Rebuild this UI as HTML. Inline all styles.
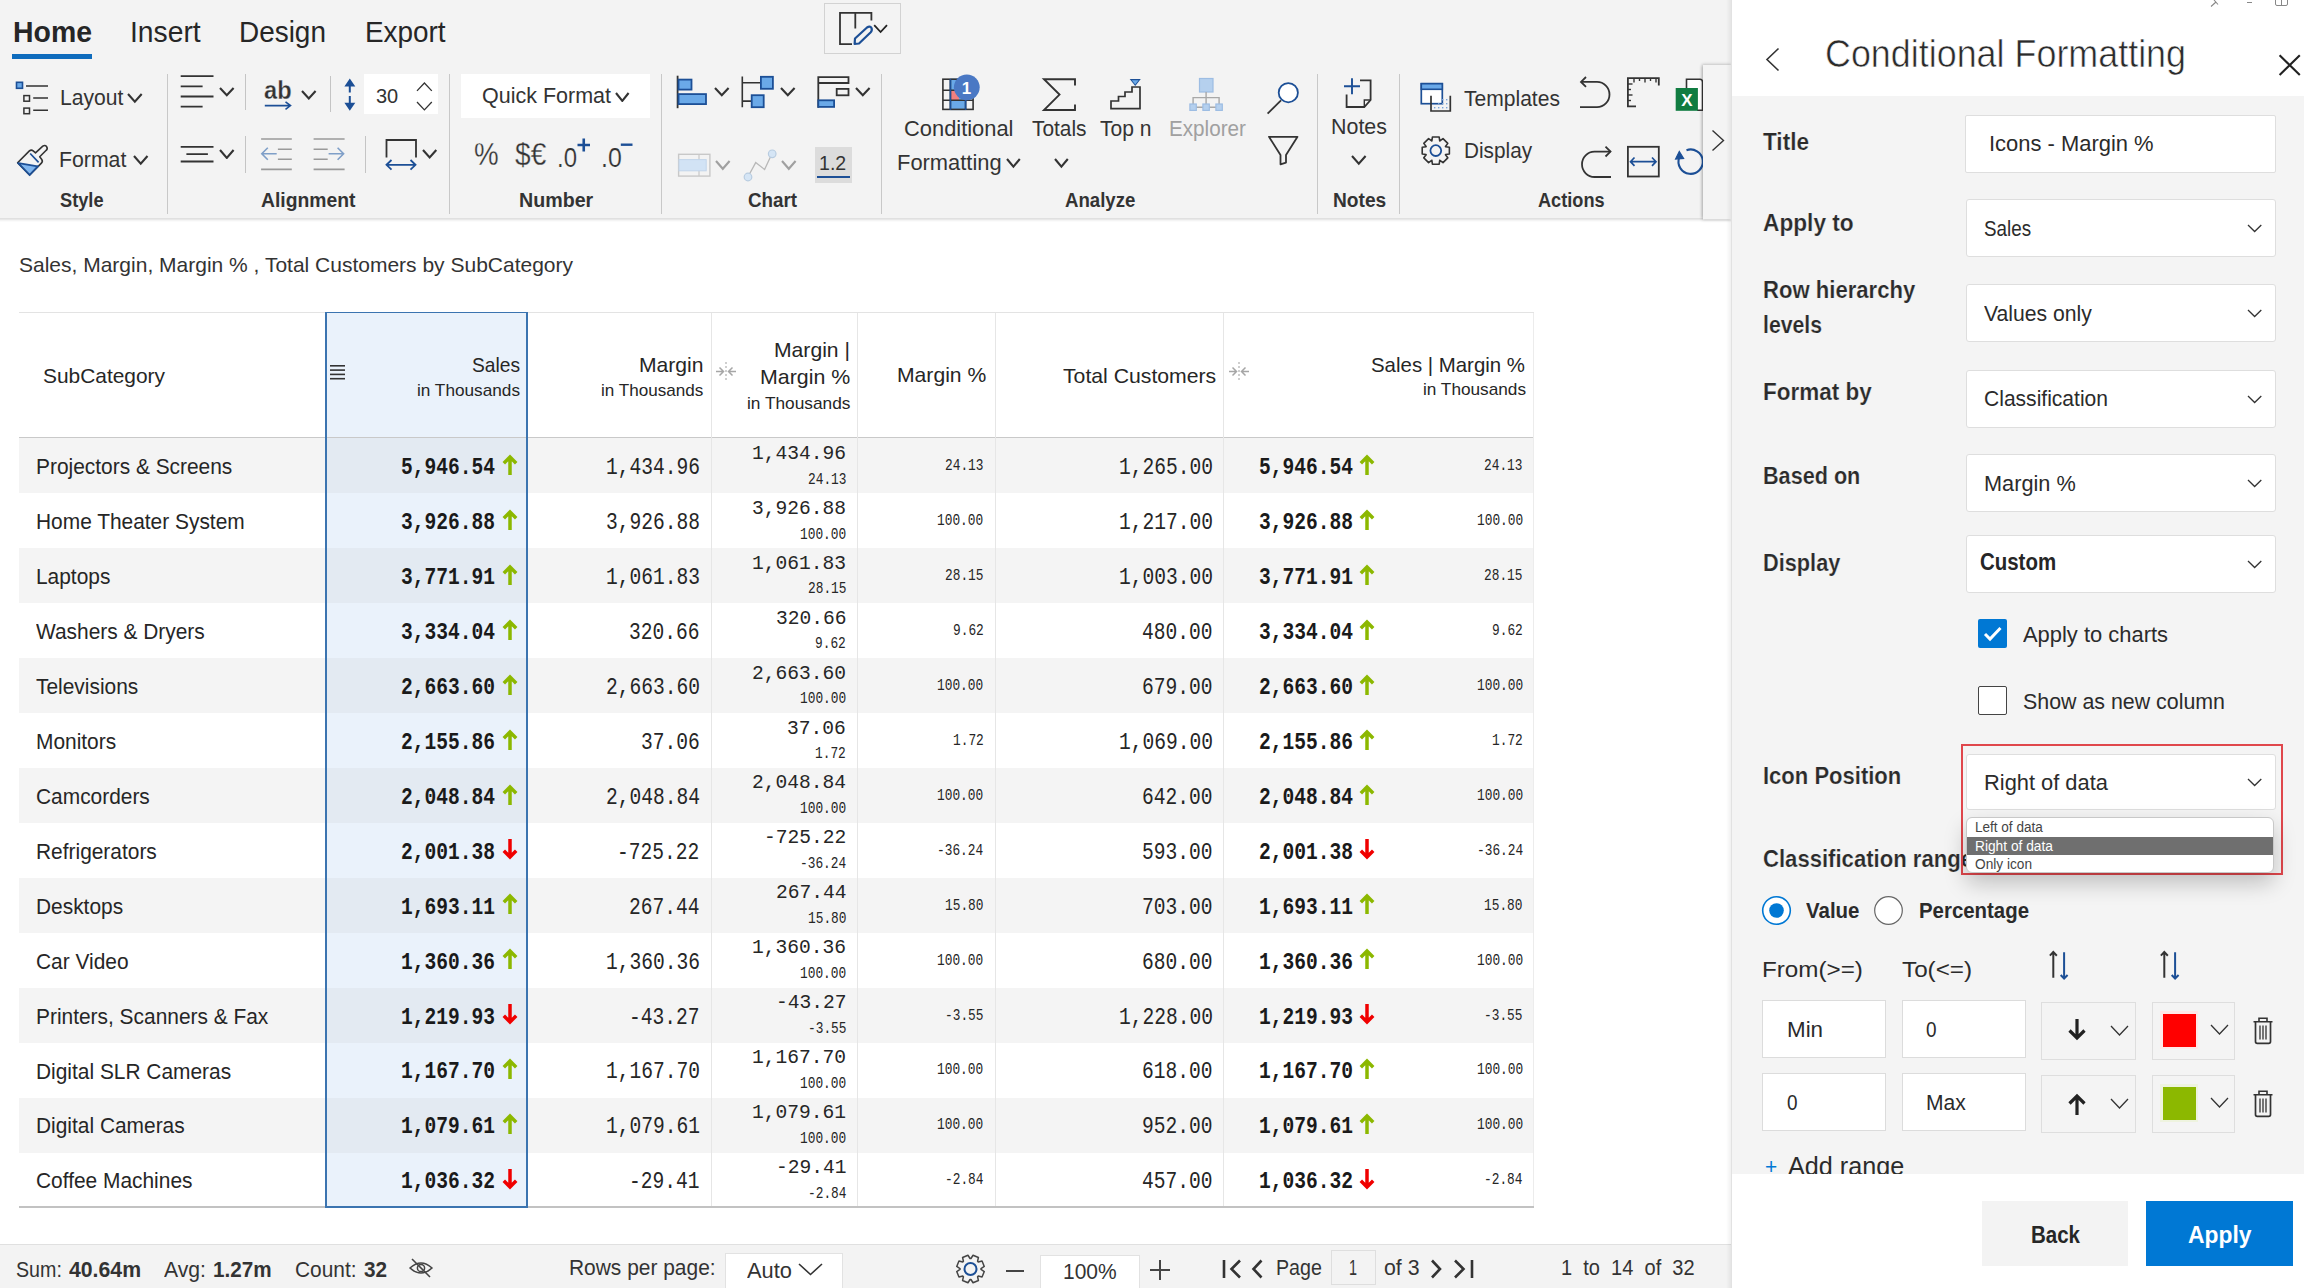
<!DOCTYPE html><html><head><meta charset="utf-8"><style>
*{margin:0;padding:0;box-sizing:border-box}
html,body{width:2304px;height:1288px;overflow:hidden;background:#fff;position:relative;font-family:"Liberation Sans",sans-serif}
.t{position:absolute;white-space:pre;transform-origin:0 0}
.r{position:absolute}
</style></head><body><div class="r" style="left:0px;top:0px;width:1732px;height:219px;background:#f3f3f3"></div>
<div class="r" style="left:0px;top:218px;width:1703px;height:2px;background:linear-gradient(#dcdcdc,#ececec)"></div>
<div class="r" style="left:0px;top:220px;width:1732px;height:2px;background:linear-gradient(rgba(0,0,0,0.06),rgba(0,0,0,0))"></div>
<div class="t" style="left:13.00px;top:16.90px;font-size:30px;line-height:30px;font-weight:700;color:#262626;font-family:'Liberation Sans', sans-serif;transform:scaleX(0.9472);">Home</div>
<div class="r" style="left:12px;top:54px;width:80px;height:5px;background:#0f6cbd"></div>
<div class="t" style="left:130.00px;top:16.90px;font-size:30px;line-height:30px;font-weight:400;color:#262626;font-family:'Liberation Sans', sans-serif;transform:scaleX(0.9413);">Insert</div>
<div class="t" style="left:239.00px;top:16.90px;font-size:30px;line-height:30px;font-weight:400;color:#262626;font-family:'Liberation Sans', sans-serif;transform:scaleX(0.9310);">Design</div>
<div class="t" style="left:365.00px;top:16.90px;font-size:30px;line-height:30px;font-weight:400;color:#262626;font-family:'Liberation Sans', sans-serif;transform:scaleX(0.9296);">Export</div>
<div class="r" style="left:824px;top:3px;width:77px;height:51px;border:1.5px solid #d2d2d2"></div>
<div class="r" style="left:167px;top:74px;width:1px;height:140px;background:#c8c8c8"></div>
<div class="r" style="left:449px;top:74px;width:1px;height:140px;background:#c8c8c8"></div>
<div class="r" style="left:661px;top:74px;width:1px;height:140px;background:#c8c8c8"></div>
<div class="r" style="left:881px;top:74px;width:1px;height:140px;background:#c8c8c8"></div>
<div class="r" style="left:1317px;top:74px;width:1px;height:140px;background:#c8c8c8"></div>
<div class="r" style="left:1399px;top:74px;width:1px;height:140px;background:#c8c8c8"></div>
<div class="r" style="left:245px;top:74px;width:1px;height:36px;background:#c4c4c4"></div>
<div class="r" style="left:330px;top:76px;width:1px;height:36px;background:#c4c4c4"></div>
<div class="r" style="left:245px;top:136px;width:1px;height:37px;background:#c4c4c4"></div>
<div class="r" style="left:365px;top:136px;width:1px;height:37px;background:#c4c4c4"></div>
<div class="t" style="left:60.00px;top:190.07px;font-size:20px;line-height:20px;font-weight:700;color:#333;font-family:'Liberation Sans', sans-serif;transform:scaleX(0.9100);">Style</div>
<div class="t" style="left:261.00px;top:190.07px;font-size:20px;line-height:20px;font-weight:700;color:#333;font-family:'Liberation Sans', sans-serif;transform:scaleX(0.9663);">Alignment</div>
<div class="t" style="left:518.70px;top:190.07px;font-size:20px;line-height:20px;font-weight:700;color:#333;font-family:'Liberation Sans', sans-serif;transform:scaleX(0.9828);">Number</div>
<div class="t" style="left:748.00px;top:190.07px;font-size:20px;line-height:20px;font-weight:700;color:#333;font-family:'Liberation Sans', sans-serif;transform:scaleX(0.9387);">Chart</div>
<div class="t" style="left:1065.00px;top:190.07px;font-size:20px;line-height:20px;font-weight:700;color:#333;font-family:'Liberation Sans', sans-serif;transform:scaleX(0.9312);">Analyze</div>
<div class="t" style="left:1332.70px;top:190.07px;font-size:20px;line-height:20px;font-weight:700;color:#333;font-family:'Liberation Sans', sans-serif;transform:scaleX(0.9586);">Notes</div>
<div class="t" style="left:1538.20px;top:189.57px;font-size:20px;line-height:20px;font-weight:700;color:#333;font-family:'Liberation Sans', sans-serif;transform:scaleX(0.9086);">Actions</div>
<div class="t" style="left:60.40px;top:87.08px;font-size:22px;line-height:22px;font-weight:400;color:#333333;font-family:'Liberation Sans', sans-serif;transform:scaleX(0.9590);">Layout</div>
<svg class="r" style="left:126.30000000000001px;top:92px;" width="17.69999999999999" height="11.700000000000003" viewBox="0 0 17.69999999999999 11.700000000000003" fill="none"><path d="M2 2 L8.85 9.70 L15.70 2" stroke="#333333" stroke-width="2.1" fill="none"/></svg>
<div class="t" style="left:58.70px;top:148.68px;font-size:22px;line-height:22px;font-weight:400;color:#333333;font-family:'Liberation Sans', sans-serif;transform:scaleX(0.9665);">Format</div>
<svg class="r" style="left:132px;top:154px;" width="17.5" height="11.75" viewBox="0 0 17.5 11.75" fill="none"><path d="M2 2 L8.75 9.75 L15.50 2" stroke="#333333" stroke-width="2.1" fill="none"/></svg>
<div class="r" style="left:364px;top:74px;width:74px;height:40px;background:#ffffff"></div>
<div class="t" style="left:376.00px;top:85.22px;font-size:21px;line-height:21px;font-weight:400;color:#333333;font-family:'Liberation Sans', sans-serif;transform:scaleX(0.9524);">30</div>
<svg class="r" style="left:415.3px;top:80.8px;" width="18.8" height="11.9" viewBox="0 0 18.8 11.9" fill="none"><path d="M2 9.9 L9.4 2 L16.8 9.9" stroke="#333" stroke-width="1.3" fill="none"/></svg>
<svg class="r" style="left:415.3px;top:99.6px;" width="18.80000000000001" height="11.900000000000006" viewBox="0 0 18.80000000000001 11.900000000000006" fill="none"><path d="M2 2 L9.40 9.90 L16.80 2" stroke="#333333" stroke-width="1.3" fill="none"/></svg>
<div class="t" style="left:263.80px;top:77.19px;font-size:26px;line-height:26px;font-weight:700;color:#333333;font-family:'Liberation Sans', sans-serif;transform:scaleX(0.9079);-webkit-text-stroke:0.3px #f3f3f3;">ab</div>
<svg class="r" style="left:217.8px;top:86.2px;" width="17.599999999999994" height="11.299999999999997" viewBox="0 0 17.599999999999994 11.299999999999997" fill="none"><path d="M2 2 L8.80 9.30 L15.60 2" stroke="#333333" stroke-width="2.1" fill="none"/></svg>
<svg class="r" style="left:300.2px;top:88.7px;" width="17.600000000000023" height="11.5" viewBox="0 0 17.600000000000023 11.5" fill="none"><path d="M2 2 L8.80 9.50 L15.60 2" stroke="#333333" stroke-width="2.1" fill="none"/></svg>
<svg class="r" style="left:217.8px;top:147.6px;" width="17.599999999999994" height="11.900000000000006" viewBox="0 0 17.599999999999994 11.900000000000006" fill="none"><path d="M2 2 L8.80 9.90 L15.60 2" stroke="#333333" stroke-width="2.1" fill="none"/></svg>
<svg class="r" style="left:421.4px;top:148.2px;" width="17.30000000000001" height="11.5" viewBox="0 0 17.30000000000001 11.5" fill="none"><path d="M2 2 L8.65 9.50 L15.30 2" stroke="#333333" stroke-width="2.1" fill="none"/></svg>
<div class="r" style="left:461px;top:74px;width:189px;height:44px;background:#ffffff"></div>
<div class="t" style="left:482.00px;top:85.50px;font-size:21.5px;line-height:21.5px;font-weight:400;color:#333333;font-family:'Liberation Sans', sans-serif;">Quick Format</div>
<svg class="r" style="left:614.2px;top:90.5px;" width="16.59999999999991" height="11.900000000000006" viewBox="0 0 16.59999999999991 11.900000000000006" fill="none"><path d="M2 2 L8.30 9.90 L14.60 2" stroke="#333333" stroke-width="2.1" fill="none"/></svg>
<div class="t" style="left:474.10px;top:139.36px;font-size:31px;line-height:31px;font-weight:400;color:#333333;font-family:'Liberation Sans', sans-serif;transform:scaleX(0.8953);-webkit-text-stroke:0.3px #f3f3f3;">%</div>
<div class="t" style="left:515.10px;top:139.36px;font-size:31px;line-height:31px;font-weight:400;color:#333333;font-family:'Liberation Sans', sans-serif;transform:scaleX(0.9067);-webkit-text-stroke:0.3px #f3f3f3;">$€</div>
<div class="t" style="left:557.00px;top:144.30px;font-size:28px;line-height:28px;font-weight:400;color:#333333;font-family:'Liberation Sans', sans-serif;transform:scaleX(0.8554);-webkit-text-stroke:0.2px #f3f3f3;">.0</div>
<div class="t" style="left:600.50px;top:144.30px;font-size:28px;line-height:28px;font-weight:400;color:#333333;font-family:'Liberation Sans', sans-serif;transform:scaleX(0.8896);-webkit-text-stroke:0.2px #f3f3f3;">.0</div>
<svg class="r" style="left:712.5px;top:86.3px;" width="17.600000000000023" height="11.299999999999997" viewBox="0 0 17.600000000000023 11.299999999999997" fill="none"><path d="M2 2 L8.80 9.30 L15.60 2" stroke="#333333" stroke-width="2.1" fill="none"/></svg>
<svg class="r" style="left:778.5px;top:86.3px;" width="17.600000000000023" height="11.299999999999997" viewBox="0 0 17.600000000000023 11.299999999999997" fill="none"><path d="M2 2 L8.80 9.30 L15.60 2" stroke="#333333" stroke-width="2.1" fill="none"/></svg>
<svg class="r" style="left:853.7px;top:86.3px;" width="17.600000000000023" height="11.299999999999997" viewBox="0 0 17.600000000000023 11.299999999999997" fill="none"><path d="M2 2 L8.80 9.30 L15.60 2" stroke="#333333" stroke-width="2.1" fill="none"/></svg>
<svg class="r" style="left:714.4px;top:159px;" width="17.600000000000023" height="11.800000000000011" viewBox="0 0 17.600000000000023 11.800000000000011" fill="none"><path d="M2 2 L8.80 9.80 L15.60 2" stroke="#a0a0a0" stroke-width="2.1" fill="none"/></svg>
<svg class="r" style="left:780.4px;top:159px;" width="17.600000000000023" height="11.800000000000011" viewBox="0 0 17.600000000000023 11.800000000000011" fill="none"><path d="M2 2 L8.80 9.80 L15.60 2" stroke="#a0a0a0" stroke-width="2.1" fill="none"/></svg>
<div class="r" style="left:815px;top:147px;width:37px;height:36px;background:#dcdcdc"></div>
<div class="t" style="left:819.30px;top:152.02px;font-size:21px;line-height:21px;font-weight:400;color:#333333;font-family:'Liberation Sans', sans-serif;transform:scaleX(0.9318);">1.2</div>
<div class="r" style="left:817px;top:175.5px;width:33px;height:2.2px;background:#1c4f96"></div>
<div class="t" style="left:903.50px;top:118.38px;font-size:22px;line-height:22px;font-weight:400;color:#333333;font-family:'Liberation Sans', sans-serif;transform:scaleX(0.9945);">Conditional</div>
<div class="t" style="left:897.30px;top:151.88px;font-size:22px;line-height:22px;font-weight:400;color:#333333;font-family:'Liberation Sans', sans-serif;transform:scaleX(0.9956);">Formatting</div>
<svg class="r" style="left:1005.2px;top:157.3px;" width="16.799999999999955" height="11.699999999999989" viewBox="0 0 16.799999999999955 11.699999999999989" fill="none"><path d="M2 2 L8.40 9.70 L14.80 2" stroke="#333333" stroke-width="2.1" fill="none"/></svg>
<div class="t" style="left:1032.40px;top:118.38px;font-size:22px;line-height:22px;font-weight:400;color:#333333;font-family:'Liberation Sans', sans-serif;transform:scaleX(0.9491);">Totals</div>
<svg class="r" style="left:1053.2px;top:157.3px;" width="16.799999999999955" height="11.699999999999989" viewBox="0 0 16.799999999999955 11.699999999999989" fill="none"><path d="M2 2 L8.40 9.70 L14.80 2" stroke="#333333" stroke-width="2.1" fill="none"/></svg>
<div class="t" style="left:1099.80px;top:118.38px;font-size:22px;line-height:22px;font-weight:400;color:#333333;font-family:'Liberation Sans', sans-serif;transform:scaleX(0.9574);">Top n</div>
<div class="t" style="left:1168.70px;top:117.98px;font-size:22px;line-height:22px;font-weight:400;color:#a0a0a0;font-family:'Liberation Sans', sans-serif;transform:scaleX(0.9396);">Explorer</div>
<div class="t" style="left:1331.40px;top:116.38px;font-size:22px;line-height:22px;font-weight:400;color:#333333;font-family:'Liberation Sans', sans-serif;transform:scaleX(0.9735);">Notes</div>
<svg class="r" style="left:1350px;top:154.1px;" width="17.59999999999991" height="11.599999999999994" viewBox="0 0 17.59999999999991 11.599999999999994" fill="none"><path d="M2 2 L8.80 9.60 L15.60 2" stroke="#333333" stroke-width="2.1" fill="none"/></svg>
<div class="t" style="left:1463.70px;top:87.88px;font-size:22px;line-height:22px;font-weight:400;color:#333333;font-family:'Liberation Sans', sans-serif;transform:scaleX(0.9569);">Templates</div>
<div class="t" style="left:1464.40px;top:140.18px;font-size:22px;line-height:22px;font-weight:400;color:#333333;font-family:'Liberation Sans', sans-serif;transform:scaleX(0.9437);">Display</div>
<div class="r" style="left:1703px;top:65px;width:29px;height:154px;background:#f7f7f7;box-shadow:-1px 1px 3px rgba(0,0,0,0.18)"></div>
<svg class="r" style="left:1710px;top:128px;" width="16" height="26" viewBox="0 0 16 26" fill="none"><path d="M2.5 2.5 L13.5 12.5 L2.5 22.5" stroke="#333" stroke-width="1.4"/></svg>
<svg class="r" style="left:0;top:0" width="1732" height="220" viewBox="0 0 1732 220" fill="none"><rect x="16.5" y="82.3" width="6" height="6" fill="#6aa9e8" stroke="#1c4f96" stroke-width="1.6"/><rect x="23.9" y="95.6" width="5.6" height="5.6" stroke="#333333" stroke-width="1.5"/><rect x="23.9" y="108.1" width="5.6" height="5.6" stroke="#333333" stroke-width="1.5"/><path d="M26 86 H48 M33.2 98.1 H48 M33.2 110.2 H48" stroke="#333333" stroke-width="1.5"/><path d="M18.2 162.9 L37.8 166.3 L29.65 174.6 Z" fill="#7fb6f0"/><path d="M17.63 162.7 L29.4 150.9 Q31.3 149.3 33.2 150.9 L35.5 152.9 L42.8 146.2 Q44.9 144.6 46.6 146.6 Q48 148.6 46.2 150.3 L39.7 156.8 L41.6 159.2 Q43.2 161.2 41.4 163.1 L29.65 175 Z" stroke="#333333" stroke-width="1.6" stroke-linejoin="round"/><path d="M17.63 162.7 L29.65 175 L38.6 165.6 M18.5 163.2 L37.8 166.3 M30.2 153.5 L38.6 162.4" stroke="#1c4f96" stroke-width="1.7"/><path d="M852 44.2 H840 V12.8 H871.4 V20.5 M855.3 12.8 V28.4" stroke="#333333" stroke-width="1.8"/><path d="M854.6 44 L855 38.5 L867 27.5 Q870 25.5 871.5 28 Q872.5 30.5 870.5 32.5 L859 43.5 Z" stroke="#1c4f96" stroke-width="2.2" stroke-linejoin="round"/><path d="M874.2 25.2 L880.6 32 L887 25.2" stroke="#222" stroke-width="1.8"/><path d="M180.7 76.1 H213.5 M180.7 86.4 H202.6 M180.7 96.5 H213.5 M180.7 106.7 H202.6" stroke="#333333" stroke-width="1.8"/><path d="M180.7 146.8 H213.5 M186.4 154.1 H207.9 M180.7 161.5 H213.5" stroke="#333333" stroke-width="1.8"/><path d="M264.8 105.6 H290.5 M285.5 101.8 L290.5 105.6 L285.5 109.4" stroke="#1c4f96" stroke-width="1.6"/><path d="M349.8 84 V92.5 M349.8 96 V105" stroke="#1c4f96" stroke-width="2"/><path d="M344.4 86.5 L349.8 78.5 L355.3 86.5 Z M344.4 102.7 L349.8 110.7 L355.3 102.7 Z" fill="#1c4f96"/><path d="M261.1 139 H291.8 M277.9 149.2 H291.8 M277.9 159.3 H291.8 M261.1 169.4 H291.8" stroke="#9a9a9a" stroke-width="1.6"/><path d="M276.7 153.8 H262 M267.8 147.8 L261.8 153.8 L267.8 159.8" stroke="#7f9fc8" stroke-width="1.6"/><path d="M313.6 139 H344.6 M313.6 149.2 H327.7 M313.6 159.3 H327.7 M313.6 169.4 H344.6" stroke="#9a9a9a" stroke-width="1.6"/><path d="M328.6 153.8 H343.6 M337.6 147.8 L343.6 153.8 L337.6 159.8" stroke="#7f9fc8" stroke-width="1.6"/><path d="M386.5 157.5 V140 H416 V157.5" stroke="#333333" stroke-width="1.8"/><path d="M387 164.8 H415.5 M391.5 160 L386.5 164.8 L391.5 169.6 M410.5 160 L415.5 164.8 L410.5 169.6" stroke="#1c4f96" stroke-width="1.8"/><path d="M577.5 145 H590 M583.75 138.6 V151.6" stroke="#1c4f96" stroke-width="2.6"/><path d="M620.8 144.7 H632.5" stroke="#1c4f96" stroke-width="2.4"/><path d="M677.6 75.7 V108.2" stroke="#333333" stroke-width="1.8"/><rect x="678.5" y="79.6" width="13" height="10" fill="#6aa9e8" stroke="#1c4f96" stroke-width="1.8"/><rect x="678.5" y="94.1" width="27.5" height="10" fill="#6aa9e8" stroke="#1c4f96" stroke-width="1.8"/><path d="M742.3 76.6 V107.2 M742.3 82.8 H760 M742.3 101.1 H751" stroke="#333333" stroke-width="1.6"/><rect x="760.9" y="76.8" width="12" height="12" fill="#6aa9e8" stroke="#1c4f96" stroke-width="1.8"/><rect x="751.7" y="95.2" width="12" height="12" fill="#6aa9e8" stroke="#1c4f96" stroke-width="1.8"/><path d="M818.3 107.7 V77.1 H848.5 V83 H818.3" stroke="#333333" stroke-width="1.8"/><rect x="836.7" y="88.9" width="11.8" height="6.4" stroke="#333333" stroke-width="1.8"/><rect x="818.3" y="100.3" width="15.8" height="6.6" fill="#6aa9e8" stroke="#1c4f96" stroke-width="1.8"/><rect x="678.6" y="154.3" width="31.3" height="21.8" stroke="#c8c8c8" stroke-width="1.4"/><path d="M699 154.3 V176" stroke="#c8c8c8" stroke-width="1.2"/><rect x="679" y="159.6" width="27.2" height="11.2" fill="#d2e3f5" stroke="#c3d5ea" stroke-width="1"/><path d="M749.5 174 L755.7 162.6 L764.6 169.5 L770.5 156.8" stroke="#b8b8b8" stroke-width="1.3"/><circle cx="748" cy="177" r="3.8" fill="#d5e5f5" stroke="#b8cce0" stroke-width="1.2"/><circle cx="772.2" cy="153.8" r="3.8" fill="#d5e5f5" stroke="#b8cce0" stroke-width="1.2"/><rect x="950.4" y="78.5" width="15.2" height="31.6" fill="#6aa9e8"/><path d="M950.8 90.2 H959 V100 H950.8 Z" fill="#f08080"/><rect x="942.9" y="79.2" width="30.2" height="30.2" stroke="#333333" stroke-width="1.6"/><path d="M950.4 79 V110 M965.6 79 V110 M943 90.2 H973 M943 100.2 H973" stroke="#333333" stroke-width="1.6"/><path d="M950.4 79 V110 M965.6 79 V110" stroke="#1c4f96" stroke-width="1.6"/><circle cx="966.8" cy="87.3" r="12.9" fill="#4a78c4"/><text x="966.5" y="94" font-family="Liberation Sans" font-weight="700" font-size="17" fill="#fff" text-anchor="middle">1</text><path d="M1075 85.5 V79.3 H1044 L1059.5 94.6 L1044 110 H1075 V104.5" stroke="#333333" stroke-width="1.9" stroke-linejoin="miter"/><path d="M1111 108.7 V101 H1118.5 V96.5 H1125 V92 H1132 V87 H1140 V108.7 Z" stroke="#333333" stroke-width="1.7"/><path d="M1129.7 79 H1140.8 L1135.25 86.1 Z" fill="#1c4f96"/><path d="M1131.8 80.3 H1138.7 L1135.25 84.5 Z" fill="#6aa9e8"/><rect x="1199.5" y="78.5" width="13.5" height="13.5" fill="#b5d0ee" stroke="#9dbde3" stroke-width="1.2"/><path d="M1206.1 92 V107 M1193.1 104 V97.6 H1219.1 V104 M1193 107.3 H1219" stroke="#a8a8a8" stroke-width="1.4"/><rect x="1189.8999999999999" y="104" width="6.4" height="6.4" fill="#b5d0ee" stroke="#9dbde3" stroke-width="1.2"/><rect x="1202.8999999999999" y="104" width="6.4" height="6.4" fill="#b5d0ee" stroke="#9dbde3" stroke-width="1.2"/><rect x="1215.8999999999999" y="104" width="6.4" height="6.4" fill="#b5d0ee" stroke="#9dbde3" stroke-width="1.2"/><circle cx="1288.3" cy="92.7" r="9.6" fill="#fff" stroke="#1c4f96" stroke-width="1.8"/><path d="M1267.6 113.6 L1281 100.4" stroke="#333333" stroke-width="1.8"/><path d="M1269 136.8 H1297.5 L1286 155 V162.6 L1280.5 164.3 V155 Z" stroke="#333333" stroke-width="1.8" stroke-linejoin="round"/><path d="M1360 80.4 H1370.6 V100 L1364.3 107 H1346.6 V94.5" stroke="#333333" stroke-width="1.8"/><path d="M1370.6 100 H1364.3 V107" stroke="#333333" stroke-width="1.4"/><path d="M1344 86.3 H1360 M1352 78.3 V94.3" stroke="#1c4f96" stroke-width="1.9"/><rect x="1421.3" y="83.7" width="21" height="20" fill="#fff" stroke="#1c4f96" stroke-width="1.7"/><rect x="1421.3" y="83.7" width="21" height="5.6" fill="#6aa9e8" stroke="#1c4f96" stroke-width="1.6"/><path d="M1431 95.8 V111 H1450.3 V95.8" stroke="#333333" stroke-width="1.7"/><rect x="1442" y="99" width="1.4" height="1.4" fill="#7aa3d6"/><rect x="1446" y="99" width="1.4" height="1.4" fill="#7aa3d6"/><rect x="1438" y="103" width="1.4" height="1.4" fill="#7aa3d6"/><rect x="1442" y="103" width="1.4" height="1.4" fill="#7aa3d6"/><rect x="1446" y="103" width="1.4" height="1.4" fill="#7aa3d6"/><rect x="1434" y="107" width="1.4" height="1.4" fill="#7aa3d6"/><rect x="1438" y="107" width="1.4" height="1.4" fill="#7aa3d6"/><rect x="1442" y="107" width="1.4" height="1.4" fill="#7aa3d6"/><rect x="1446" y="107" width="1.4" height="1.4" fill="#7aa3d6"/><path d="M1449.38 147.21 L1449.38 153.99 L1445.54 154.53 L1445.47 154.70 L1447.80 157.81 L1443.01 162.60 L1439.90 160.27 L1439.73 160.34 L1439.19 164.18 L1432.41 164.18 L1431.87 160.34 L1431.70 160.27 L1428.59 162.60 L1423.80 157.81 L1426.13 154.70 L1426.06 154.53 L1422.22 153.99 L1422.22 147.21 L1426.06 146.67 L1426.13 146.50 L1423.80 143.39 L1428.59 138.60 L1431.70 140.93 L1431.87 140.86 L1432.41 137.02 L1439.19 137.02 L1439.73 140.86 L1439.90 140.93 L1443.01 138.60 L1447.80 143.39 L1445.47 146.50 L1445.54 146.67 Z" stroke="#333333" stroke-width="1.6" stroke-linejoin="round"/><circle cx="1435.8" cy="150.6" r="5.4" stroke="#1c4f96" stroke-width="1.8"/><path d="M1581 81.9 H1597 A12.5 12.6 0 0 1 1597 107.1 H1580" stroke="#333333" stroke-width="1.8"/><path d="M1586 77 L1581 81.9 L1586 86.8" stroke="#333333" stroke-width="1.8"/><path d="M1610.5 151.6 H1594.5 A12.5 12.7 0 0 0 1594.5 177 H1611" stroke="#333333" stroke-width="1.8"/><path d="M1605.5 146.7 L1610.5 151.6 L1605.5 156.5" stroke="#333333" stroke-width="1.8"/><path d="M1636 106.3 H1627.9 V78.1 H1658.8 V85.5" stroke="#333333" stroke-width="1.8"/><path d="M1634.0 78 V82.5" stroke="#333333" stroke-width="1.4"/><path d="M1639.5 78 V81" stroke="#333333" stroke-width="1.4"/><path d="M1645.0 78 V82.5" stroke="#333333" stroke-width="1.4"/><path d="M1650.5 78 V81" stroke="#333333" stroke-width="1.4"/><path d="M1656.0 78 V82.5" stroke="#333333" stroke-width="1.4"/><path d="M1628 84.0 H1632.5" stroke="#333333" stroke-width="1.4"/><path d="M1628 89.5 H1631" stroke="#333333" stroke-width="1.4"/><path d="M1628 95.0 H1632.5" stroke="#333333" stroke-width="1.4"/><path d="M1628 100.5 H1631" stroke="#333333" stroke-width="1.4"/><rect x="1627.9" y="146.8" width="30.9" height="29.7" stroke="#333333" stroke-width="1.8"/><path d="M1630.5 161.7 H1656 M1634.5 157.5 L1630.5 161.7 L1634.5 165.9 M1652 157.5 L1656 161.7 L1652 165.9" stroke="#1c4f96" stroke-width="1.7"/><path d="M1686.5 88 V79.3 H1700 Q1702.5 79.3 1702.5 82 V110.3 H1697" fill="#fff" stroke="#333333" stroke-width="1.6"/><rect x="1675.7" y="88" width="22.2" height="22.8" fill="#107c41"/><text x="1686.8" y="106" font-family="Liberation Sans" font-weight="700" font-size="17" fill="#fff" text-anchor="middle">X</text><path d="M1686.5 150.2 A12.2 12.2 0 1 1 1679.2 157.5" stroke="#1c4f96" stroke-width="2.1"/><path d="M1675.6 159 L1679.3 151.5 L1683.6 158.4 Z" fill="#1c4f96" stroke="#1c4f96" stroke-width="1.2"/></svg>
<div class="r" style="left:1703px;top:65px;width:29px;height:154px;background:#f4f4f4;box-shadow:-1px -1px 3px rgba(0,0,0,0.16)"></div>
<svg class="r" style="left:1710px;top:128px;" width="16" height="26" viewBox="0 0 16 26" fill="none"><path d="M2.5 2.5 L13.5 12.5 L2.5 22.5" stroke="#333" stroke-width="1.4"/></svg>
<div class="t" style="left:19.00px;top:254.22px;font-size:21px;line-height:21px;font-weight:400;color:#333333;font-family:'Liberation Sans', sans-serif;">Sales, Margin, Margin % , Total Customers by SubCategory</div>
<div class="r" style="left:19px;top:312px;width:1515px;height:1px;background:#e3e3e3"></div>
<div class="r" style="left:19px;top:438px;width:1515px;height:55px;background:#f4f4f4"></div>
<div class="r" style="left:19px;top:548px;width:1515px;height:55px;background:#f4f4f4"></div>
<div class="r" style="left:19px;top:658px;width:1515px;height:55px;background:#f4f4f4"></div>
<div class="r" style="left:19px;top:768px;width:1515px;height:55px;background:#f4f4f4"></div>
<div class="r" style="left:19px;top:878px;width:1515px;height:55px;background:#f4f4f4"></div>
<div class="r" style="left:19px;top:988px;width:1515px;height:55px;background:#f4f4f4"></div>
<div class="r" style="left:19px;top:1098px;width:1515px;height:55px;background:#f4f4f4"></div>
<div class="r" style="left:325px;top:312px;width:203px;height:126px;background:#eaf2fb"></div>
<div class="r" style="left:325px;top:438px;width:203px;height:55px;background:#e3eaf2"></div>
<div class="r" style="left:325px;top:493px;width:203px;height:55px;background:#eaf2fb"></div>
<div class="r" style="left:325px;top:548px;width:203px;height:55px;background:#e3eaf2"></div>
<div class="r" style="left:325px;top:603px;width:203px;height:55px;background:#eaf2fb"></div>
<div class="r" style="left:325px;top:658px;width:203px;height:55px;background:#e3eaf2"></div>
<div class="r" style="left:325px;top:713px;width:203px;height:55px;background:#eaf2fb"></div>
<div class="r" style="left:325px;top:768px;width:203px;height:55px;background:#e3eaf2"></div>
<div class="r" style="left:325px;top:823px;width:203px;height:55px;background:#eaf2fb"></div>
<div class="r" style="left:325px;top:878px;width:203px;height:55px;background:#e3eaf2"></div>
<div class="r" style="left:325px;top:933px;width:203px;height:55px;background:#eaf2fb"></div>
<div class="r" style="left:325px;top:988px;width:203px;height:55px;background:#e3eaf2"></div>
<div class="r" style="left:325px;top:1043px;width:203px;height:55px;background:#eaf2fb"></div>
<div class="r" style="left:325px;top:1098px;width:203px;height:55px;background:#e3eaf2"></div>
<div class="r" style="left:325px;top:1153px;width:203px;height:55px;background:#eaf2fb"></div>
<div class="r" style="left:19px;top:436.8px;width:1515px;height:1.7px;background:#c9c9c9"></div>
<div class="r" style="left:19px;top:1206px;width:1515px;height:2px;background:#c2c2c2"></div>
<div class="r" style="left:711px;top:313px;width:1px;height:893px;background:#e6e6e6"></div>
<div class="r" style="left:857px;top:313px;width:1px;height:893px;background:#e6e6e6"></div>
<div class="r" style="left:995px;top:313px;width:1px;height:893px;background:#e6e6e6"></div>
<div class="r" style="left:1223px;top:313px;width:1px;height:893px;background:#e6e6e6"></div>
<div class="r" style="left:1533px;top:313px;width:1px;height:893px;background:#ececec"></div>
<div class="r" style="left:325px;top:312px;width:203px;height:896px;border:2px solid #3b74b0;border-top-width:1.6px"></div>
<div class="t" style="left:43.00px;top:365.22px;font-size:21px;line-height:21px;font-weight:400;color:#262626;font-family:'Liberation Sans', sans-serif;transform:scaleX(0.9956);">SubCategory</div>
<div class="t" style="left:472.00px;top:354.22px;font-size:21px;line-height:21px;font-weight:400;color:#262626;font-family:'Liberation Sans', sans-serif;transform:scaleX(0.9143);">Sales</div>
<div class="t" style="left:417.00px;top:381.61px;font-size:17px;line-height:17px;font-weight:400;color:#262626;font-family:'Liberation Sans', sans-serif;transform:scaleX(1.0123);">in Thousands</div>
<div class="t" style="left:638.50px;top:354.22px;font-size:21px;line-height:21px;font-weight:400;color:#262626;font-family:'Liberation Sans', sans-serif;transform:scaleX(1.0054);">Margin</div>
<div class="t" style="left:600.70px;top:381.61px;font-size:17px;line-height:17px;font-weight:400;color:#262626;font-family:'Liberation Sans', sans-serif;transform:scaleX(1.0055);">in Thousands</div>
<div class="t" style="left:774.00px;top:339.22px;font-size:21px;line-height:21px;font-weight:400;color:#262626;font-family:'Liberation Sans', sans-serif;transform:scaleX(1.0067);">Margin |</div>
<div class="t" style="left:759.70px;top:366.22px;font-size:21px;line-height:21px;font-weight:400;color:#262626;font-family:'Liberation Sans', sans-serif;transform:scaleX(1.0178);">Margin %</div>
<div class="t" style="left:746.60px;top:394.61px;font-size:17px;line-height:17px;font-weight:400;color:#262626;font-family:'Liberation Sans', sans-serif;transform:scaleX(1.0163);">in Thousands</div>
<div class="t" style="left:896.70px;top:364.22px;font-size:21px;line-height:21px;font-weight:400;color:#262626;font-family:'Liberation Sans', sans-serif;transform:scaleX(1.0065);">Margin %</div>
<div class="t" style="left:1063.40px;top:365.22px;font-size:21px;line-height:21px;font-weight:400;color:#262626;font-family:'Liberation Sans', sans-serif;transform:scaleX(1.0097);">Total Customers</div>
<div class="t" style="left:1371.00px;top:354.22px;font-size:21px;line-height:21px;font-weight:400;color:#262626;font-family:'Liberation Sans', sans-serif;transform:scaleX(0.9726);">Sales | Margin %</div>
<div class="t" style="left:1423.00px;top:380.61px;font-size:17px;line-height:17px;font-weight:400;color:#262626;font-family:'Liberation Sans', sans-serif;transform:scaleX(1.0123);">in Thousands</div>
<svg class="r" style="left:330px;top:364px;" width="16" height="17" viewBox="0 0 16 17" fill="none"><rect x="0" y="1.0" width="15" height="1.6" fill="#333"/><rect x="0" y="5.3" width="15" height="1.6" fill="#333"/><rect x="0" y="9.6" width="15" height="1.6" fill="#333"/><rect x="0" y="13.9" width="15" height="1.6" fill="#333"/></svg>
<svg class="r" style="left:715px;top:361px;" width="22" height="21" viewBox="0 0 22 21" fill="none"><path d="M1 10.5 H8 M4.5 6.5 L8.5 10.5 L4.5 14.5 M21 10.5 H14 M17.5 6.5 L13.5 10.5 L17.5 14.5" stroke="#a6a6a6" stroke-width="1.5"/><path d="M11 1 V20" stroke="#b0b0b0" stroke-width="1.2" stroke-dasharray="2 2"/></svg>
<svg class="r" style="left:1227.5px;top:361px;" width="22" height="21" viewBox="0 0 22 21" fill="none"><path d="M1 10.5 H8 M4.5 6.5 L8.5 10.5 L4.5 14.5 M21 10.5 H14 M17.5 6.5 L13.5 10.5 L17.5 14.5" stroke="#a6a6a6" stroke-width="1.5"/><path d="M11 1 V20" stroke="#b0b0b0" stroke-width="1.2" stroke-dasharray="2 2"/></svg>
<div class="t" style="left:36.00px;top:456.38px;font-size:22px;line-height:22px;font-weight:400;color:#262626;font-family:'Liberation Sans', sans-serif;transform:scaleX(0.9500);">Projectors &amp; Screens</div>
<div class="t" style="left:400.51px;top:457.37px;font-size:23px;line-height:23px;font-weight:700;color:#1a1a1a;font-family:'Liberation Mono', monospace;transform:scaleX(0.8513);">5,946.54</div>
<svg class="r" style="left:501.5px;top:454.0px;" width="16" height="21" viewBox="0 0 16 21" fill="none"><path d="M8 21 V3 M1.8 9.2 L8 3 L14.2 9.2" stroke="#8cb800" stroke-width="3.5" stroke-linecap="butt" stroke-linejoin="miter"/></svg>
<div class="t" style="left:605.51px;top:457.37px;font-size:23px;line-height:23px;font-weight:400;color:#262626;font-family:'Liberation Mono', monospace;transform:scaleX(0.8513);">1,434.96</div>
<div class="t" style="left:752.01px;top:442.90px;font-size:21px;line-height:21px;font-weight:400;color:#262626;font-family:'Liberation Mono', monospace;transform:scaleX(0.9324);">1,434.96</div>
<div class="t" style="left:807.51px;top:471.65px;font-size:16.5px;line-height:16.5px;font-weight:400;color:#262626;font-family:'Liberation Mono', monospace;transform:scaleX(0.7777);">24.13</div>
<div class="t" style="left:945.01px;top:458.35px;font-size:16.5px;line-height:16.5px;font-weight:400;color:#262626;font-family:'Liberation Mono', monospace;transform:scaleX(0.7777);">24.13</div>
<div class="t" style="left:1118.51px;top:457.37px;font-size:23px;line-height:23px;font-weight:400;color:#262626;font-family:'Liberation Mono', monospace;transform:scaleX(0.8513);">1,265.00</div>
<div class="t" style="left:1258.51px;top:457.37px;font-size:23px;line-height:23px;font-weight:700;color:#1a1a1a;font-family:'Liberation Mono', monospace;transform:scaleX(0.8513);">5,946.54</div>
<svg class="r" style="left:1359px;top:454.0px;" width="16" height="21" viewBox="0 0 16 21" fill="none"><path d="M8 21 V3 M1.8 9.2 L8 3 L14.2 9.2" stroke="#8cb800" stroke-width="3.5" stroke-linecap="butt" stroke-linejoin="miter"/></svg>
<div class="t" style="left:1484.31px;top:458.35px;font-size:16.5px;line-height:16.5px;font-weight:400;color:#262626;font-family:'Liberation Mono', monospace;transform:scaleX(0.7777);">24.13</div>
<div class="t" style="left:36.00px;top:511.30px;font-size:22px;line-height:22px;font-weight:400;color:#262626;font-family:'Liberation Sans', sans-serif;transform:scaleX(0.9500);">Home Theater System</div>
<div class="t" style="left:400.51px;top:512.29px;font-size:23px;line-height:23px;font-weight:700;color:#1a1a1a;font-family:'Liberation Mono', monospace;transform:scaleX(0.8513);">3,926.88</div>
<svg class="r" style="left:501.5px;top:508.92px;" width="16" height="21" viewBox="0 0 16 21" fill="none"><path d="M8 21 V3 M1.8 9.2 L8 3 L14.2 9.2" stroke="#8cb800" stroke-width="3.5" stroke-linecap="butt" stroke-linejoin="miter"/></svg>
<div class="t" style="left:605.51px;top:512.29px;font-size:23px;line-height:23px;font-weight:400;color:#262626;font-family:'Liberation Mono', monospace;transform:scaleX(0.8513);">3,926.88</div>
<div class="t" style="left:752.01px;top:497.82px;font-size:21px;line-height:21px;font-weight:400;color:#262626;font-family:'Liberation Mono', monospace;transform:scaleX(0.9324);">3,926.88</div>
<div class="t" style="left:799.81px;top:526.57px;font-size:16.5px;line-height:16.5px;font-weight:400;color:#262626;font-family:'Liberation Mono', monospace;transform:scaleX(0.7777);">100.00</div>
<div class="t" style="left:937.31px;top:513.27px;font-size:16.5px;line-height:16.5px;font-weight:400;color:#262626;font-family:'Liberation Mono', monospace;transform:scaleX(0.7777);">100.00</div>
<div class="t" style="left:1118.51px;top:512.29px;font-size:23px;line-height:23px;font-weight:400;color:#262626;font-family:'Liberation Mono', monospace;transform:scaleX(0.8513);">1,217.00</div>
<div class="t" style="left:1258.51px;top:512.29px;font-size:23px;line-height:23px;font-weight:700;color:#1a1a1a;font-family:'Liberation Mono', monospace;transform:scaleX(0.8513);">3,926.88</div>
<svg class="r" style="left:1359px;top:508.92px;" width="16" height="21" viewBox="0 0 16 21" fill="none"><path d="M8 21 V3 M1.8 9.2 L8 3 L14.2 9.2" stroke="#8cb800" stroke-width="3.5" stroke-linecap="butt" stroke-linejoin="miter"/></svg>
<div class="t" style="left:1476.61px;top:513.27px;font-size:16.5px;line-height:16.5px;font-weight:400;color:#262626;font-family:'Liberation Mono', monospace;transform:scaleX(0.7777);">100.00</div>
<div class="t" style="left:36.00px;top:566.22px;font-size:22px;line-height:22px;font-weight:400;color:#262626;font-family:'Liberation Sans', sans-serif;transform:scaleX(0.9500);">Laptops</div>
<div class="t" style="left:400.51px;top:567.21px;font-size:23px;line-height:23px;font-weight:700;color:#1a1a1a;font-family:'Liberation Mono', monospace;transform:scaleX(0.8513);">3,771.91</div>
<svg class="r" style="left:501.5px;top:563.84px;" width="16" height="21" viewBox="0 0 16 21" fill="none"><path d="M8 21 V3 M1.8 9.2 L8 3 L14.2 9.2" stroke="#8cb800" stroke-width="3.5" stroke-linecap="butt" stroke-linejoin="miter"/></svg>
<div class="t" style="left:605.51px;top:567.21px;font-size:23px;line-height:23px;font-weight:400;color:#262626;font-family:'Liberation Mono', monospace;transform:scaleX(0.8513);">1,061.83</div>
<div class="t" style="left:752.01px;top:552.74px;font-size:21px;line-height:21px;font-weight:400;color:#262626;font-family:'Liberation Mono', monospace;transform:scaleX(0.9324);">1,061.83</div>
<div class="t" style="left:807.51px;top:581.49px;font-size:16.5px;line-height:16.5px;font-weight:400;color:#262626;font-family:'Liberation Mono', monospace;transform:scaleX(0.7777);">28.15</div>
<div class="t" style="left:945.01px;top:568.19px;font-size:16.5px;line-height:16.5px;font-weight:400;color:#262626;font-family:'Liberation Mono', monospace;transform:scaleX(0.7777);">28.15</div>
<div class="t" style="left:1118.51px;top:567.21px;font-size:23px;line-height:23px;font-weight:400;color:#262626;font-family:'Liberation Mono', monospace;transform:scaleX(0.8513);">1,003.00</div>
<div class="t" style="left:1258.51px;top:567.21px;font-size:23px;line-height:23px;font-weight:700;color:#1a1a1a;font-family:'Liberation Mono', monospace;transform:scaleX(0.8513);">3,771.91</div>
<svg class="r" style="left:1359px;top:563.84px;" width="16" height="21" viewBox="0 0 16 21" fill="none"><path d="M8 21 V3 M1.8 9.2 L8 3 L14.2 9.2" stroke="#8cb800" stroke-width="3.5" stroke-linecap="butt" stroke-linejoin="miter"/></svg>
<div class="t" style="left:1484.31px;top:568.19px;font-size:16.5px;line-height:16.5px;font-weight:400;color:#262626;font-family:'Liberation Mono', monospace;transform:scaleX(0.7777);">28.15</div>
<div class="t" style="left:36.00px;top:621.14px;font-size:22px;line-height:22px;font-weight:400;color:#262626;font-family:'Liberation Sans', sans-serif;transform:scaleX(0.9500);">Washers &amp; Dryers</div>
<div class="t" style="left:400.51px;top:622.13px;font-size:23px;line-height:23px;font-weight:700;color:#1a1a1a;font-family:'Liberation Mono', monospace;transform:scaleX(0.8513);">3,334.04</div>
<svg class="r" style="left:501.5px;top:618.76px;" width="16" height="21" viewBox="0 0 16 21" fill="none"><path d="M8 21 V3 M1.8 9.2 L8 3 L14.2 9.2" stroke="#8cb800" stroke-width="3.5" stroke-linecap="butt" stroke-linejoin="miter"/></svg>
<div class="t" style="left:629.01px;top:622.13px;font-size:23px;line-height:23px;font-weight:400;color:#262626;font-family:'Liberation Mono', monospace;transform:scaleX(0.8513);">320.66</div>
<div class="t" style="left:775.51px;top:607.66px;font-size:21px;line-height:21px;font-weight:400;color:#262626;font-family:'Liberation Mono', monospace;transform:scaleX(0.9324);">320.66</div>
<div class="t" style="left:815.20px;top:636.41px;font-size:16.5px;line-height:16.5px;font-weight:400;color:#262626;font-family:'Liberation Mono', monospace;transform:scaleX(0.7777);">9.62</div>
<div class="t" style="left:952.70px;top:623.11px;font-size:16.5px;line-height:16.5px;font-weight:400;color:#262626;font-family:'Liberation Mono', monospace;transform:scaleX(0.7777);">9.62</div>
<div class="t" style="left:1142.01px;top:622.13px;font-size:23px;line-height:23px;font-weight:400;color:#262626;font-family:'Liberation Mono', monospace;transform:scaleX(0.8513);">480.00</div>
<div class="t" style="left:1258.51px;top:622.13px;font-size:23px;line-height:23px;font-weight:700;color:#1a1a1a;font-family:'Liberation Mono', monospace;transform:scaleX(0.8513);">3,334.04</div>
<svg class="r" style="left:1359px;top:618.76px;" width="16" height="21" viewBox="0 0 16 21" fill="none"><path d="M8 21 V3 M1.8 9.2 L8 3 L14.2 9.2" stroke="#8cb800" stroke-width="3.5" stroke-linecap="butt" stroke-linejoin="miter"/></svg>
<div class="t" style="left:1492.00px;top:623.11px;font-size:16.5px;line-height:16.5px;font-weight:400;color:#262626;font-family:'Liberation Mono', monospace;transform:scaleX(0.7777);">9.62</div>
<div class="t" style="left:36.00px;top:676.06px;font-size:22px;line-height:22px;font-weight:400;color:#262626;font-family:'Liberation Sans', sans-serif;transform:scaleX(0.9500);">Televisions</div>
<div class="t" style="left:400.51px;top:677.05px;font-size:23px;line-height:23px;font-weight:700;color:#1a1a1a;font-family:'Liberation Mono', monospace;transform:scaleX(0.8513);">2,663.60</div>
<svg class="r" style="left:501.5px;top:673.6800000000001px;" width="16" height="21" viewBox="0 0 16 21" fill="none"><path d="M8 21 V3 M1.8 9.2 L8 3 L14.2 9.2" stroke="#8cb800" stroke-width="3.5" stroke-linecap="butt" stroke-linejoin="miter"/></svg>
<div class="t" style="left:605.51px;top:677.05px;font-size:23px;line-height:23px;font-weight:400;color:#262626;font-family:'Liberation Mono', monospace;transform:scaleX(0.8513);">2,663.60</div>
<div class="t" style="left:752.01px;top:662.58px;font-size:21px;line-height:21px;font-weight:400;color:#262626;font-family:'Liberation Mono', monospace;transform:scaleX(0.9324);">2,663.60</div>
<div class="t" style="left:799.81px;top:691.33px;font-size:16.5px;line-height:16.5px;font-weight:400;color:#262626;font-family:'Liberation Mono', monospace;transform:scaleX(0.7777);">100.00</div>
<div class="t" style="left:937.31px;top:678.03px;font-size:16.5px;line-height:16.5px;font-weight:400;color:#262626;font-family:'Liberation Mono', monospace;transform:scaleX(0.7777);">100.00</div>
<div class="t" style="left:1142.01px;top:677.05px;font-size:23px;line-height:23px;font-weight:400;color:#262626;font-family:'Liberation Mono', monospace;transform:scaleX(0.8513);">679.00</div>
<div class="t" style="left:1258.51px;top:677.05px;font-size:23px;line-height:23px;font-weight:700;color:#1a1a1a;font-family:'Liberation Mono', monospace;transform:scaleX(0.8513);">2,663.60</div>
<svg class="r" style="left:1359px;top:673.6800000000001px;" width="16" height="21" viewBox="0 0 16 21" fill="none"><path d="M8 21 V3 M1.8 9.2 L8 3 L14.2 9.2" stroke="#8cb800" stroke-width="3.5" stroke-linecap="butt" stroke-linejoin="miter"/></svg>
<div class="t" style="left:1476.61px;top:678.03px;font-size:16.5px;line-height:16.5px;font-weight:400;color:#262626;font-family:'Liberation Mono', monospace;transform:scaleX(0.7777);">100.00</div>
<div class="t" style="left:36.00px;top:730.98px;font-size:22px;line-height:22px;font-weight:400;color:#262626;font-family:'Liberation Sans', sans-serif;transform:scaleX(0.9500);">Monitors</div>
<div class="t" style="left:400.51px;top:731.97px;font-size:23px;line-height:23px;font-weight:700;color:#1a1a1a;font-family:'Liberation Mono', monospace;transform:scaleX(0.8513);">2,155.86</div>
<svg class="r" style="left:501.5px;top:728.6px;" width="16" height="21" viewBox="0 0 16 21" fill="none"><path d="M8 21 V3 M1.8 9.2 L8 3 L14.2 9.2" stroke="#8cb800" stroke-width="3.5" stroke-linecap="butt" stroke-linejoin="miter"/></svg>
<div class="t" style="left:640.76px;top:731.97px;font-size:23px;line-height:23px;font-weight:400;color:#262626;font-family:'Liberation Mono', monospace;transform:scaleX(0.8513);">37.06</div>
<div class="t" style="left:787.26px;top:717.50px;font-size:21px;line-height:21px;font-weight:400;color:#262626;font-family:'Liberation Mono', monospace;transform:scaleX(0.9324);">37.06</div>
<div class="t" style="left:815.20px;top:746.25px;font-size:16.5px;line-height:16.5px;font-weight:400;color:#262626;font-family:'Liberation Mono', monospace;transform:scaleX(0.7777);">1.72</div>
<div class="t" style="left:952.70px;top:732.95px;font-size:16.5px;line-height:16.5px;font-weight:400;color:#262626;font-family:'Liberation Mono', monospace;transform:scaleX(0.7777);">1.72</div>
<div class="t" style="left:1118.51px;top:731.97px;font-size:23px;line-height:23px;font-weight:400;color:#262626;font-family:'Liberation Mono', monospace;transform:scaleX(0.8513);">1,069.00</div>
<div class="t" style="left:1258.51px;top:731.97px;font-size:23px;line-height:23px;font-weight:700;color:#1a1a1a;font-family:'Liberation Mono', monospace;transform:scaleX(0.8513);">2,155.86</div>
<svg class="r" style="left:1359px;top:728.6px;" width="16" height="21" viewBox="0 0 16 21" fill="none"><path d="M8 21 V3 M1.8 9.2 L8 3 L14.2 9.2" stroke="#8cb800" stroke-width="3.5" stroke-linecap="butt" stroke-linejoin="miter"/></svg>
<div class="t" style="left:1492.00px;top:732.95px;font-size:16.5px;line-height:16.5px;font-weight:400;color:#262626;font-family:'Liberation Mono', monospace;transform:scaleX(0.7777);">1.72</div>
<div class="t" style="left:36.00px;top:785.90px;font-size:22px;line-height:22px;font-weight:400;color:#262626;font-family:'Liberation Sans', sans-serif;transform:scaleX(0.9500);">Camcorders</div>
<div class="t" style="left:400.51px;top:786.89px;font-size:23px;line-height:23px;font-weight:700;color:#1a1a1a;font-family:'Liberation Mono', monospace;transform:scaleX(0.8513);">2,048.84</div>
<svg class="r" style="left:501.5px;top:783.52px;" width="16" height="21" viewBox="0 0 16 21" fill="none"><path d="M8 21 V3 M1.8 9.2 L8 3 L14.2 9.2" stroke="#8cb800" stroke-width="3.5" stroke-linecap="butt" stroke-linejoin="miter"/></svg>
<div class="t" style="left:605.51px;top:786.89px;font-size:23px;line-height:23px;font-weight:400;color:#262626;font-family:'Liberation Mono', monospace;transform:scaleX(0.8513);">2,048.84</div>
<div class="t" style="left:752.01px;top:772.42px;font-size:21px;line-height:21px;font-weight:400;color:#262626;font-family:'Liberation Mono', monospace;transform:scaleX(0.9324);">2,048.84</div>
<div class="t" style="left:799.81px;top:801.17px;font-size:16.5px;line-height:16.5px;font-weight:400;color:#262626;font-family:'Liberation Mono', monospace;transform:scaleX(0.7777);">100.00</div>
<div class="t" style="left:937.31px;top:787.87px;font-size:16.5px;line-height:16.5px;font-weight:400;color:#262626;font-family:'Liberation Mono', monospace;transform:scaleX(0.7777);">100.00</div>
<div class="t" style="left:1142.01px;top:786.89px;font-size:23px;line-height:23px;font-weight:400;color:#262626;font-family:'Liberation Mono', monospace;transform:scaleX(0.8513);">642.00</div>
<div class="t" style="left:1258.51px;top:786.89px;font-size:23px;line-height:23px;font-weight:700;color:#1a1a1a;font-family:'Liberation Mono', monospace;transform:scaleX(0.8513);">2,048.84</div>
<svg class="r" style="left:1359px;top:783.52px;" width="16" height="21" viewBox="0 0 16 21" fill="none"><path d="M8 21 V3 M1.8 9.2 L8 3 L14.2 9.2" stroke="#8cb800" stroke-width="3.5" stroke-linecap="butt" stroke-linejoin="miter"/></svg>
<div class="t" style="left:1476.61px;top:787.87px;font-size:16.5px;line-height:16.5px;font-weight:400;color:#262626;font-family:'Liberation Mono', monospace;transform:scaleX(0.7777);">100.00</div>
<div class="t" style="left:36.00px;top:840.82px;font-size:22px;line-height:22px;font-weight:400;color:#262626;font-family:'Liberation Sans', sans-serif;transform:scaleX(0.9500);">Refrigerators</div>
<div class="t" style="left:400.51px;top:841.81px;font-size:23px;line-height:23px;font-weight:700;color:#1a1a1a;font-family:'Liberation Mono', monospace;transform:scaleX(0.8513);">2,001.38</div>
<svg class="r" style="left:501.5px;top:839.44px;" width="16" height="21" viewBox="0 0 16 21" fill="none"><path d="M8 0 V18 M1.8 11.8 L8 18 L14.2 11.8" stroke="#f00000" stroke-width="3.5" stroke-linecap="butt" stroke-linejoin="miter"/></svg>
<div class="t" style="left:617.26px;top:841.81px;font-size:23px;line-height:23px;font-weight:400;color:#262626;font-family:'Liberation Mono', monospace;transform:scaleX(0.8513);">-725.22</div>
<div class="t" style="left:763.76px;top:827.34px;font-size:21px;line-height:21px;font-weight:400;color:#262626;font-family:'Liberation Mono', monospace;transform:scaleX(0.9324);">-725.22</div>
<div class="t" style="left:799.81px;top:856.09px;font-size:16.5px;line-height:16.5px;font-weight:400;color:#262626;font-family:'Liberation Mono', monospace;transform:scaleX(0.7777);">-36.24</div>
<div class="t" style="left:937.31px;top:842.79px;font-size:16.5px;line-height:16.5px;font-weight:400;color:#262626;font-family:'Liberation Mono', monospace;transform:scaleX(0.7777);">-36.24</div>
<div class="t" style="left:1142.01px;top:841.81px;font-size:23px;line-height:23px;font-weight:400;color:#262626;font-family:'Liberation Mono', monospace;transform:scaleX(0.8513);">593.00</div>
<div class="t" style="left:1258.51px;top:841.81px;font-size:23px;line-height:23px;font-weight:700;color:#1a1a1a;font-family:'Liberation Mono', monospace;transform:scaleX(0.8513);">2,001.38</div>
<svg class="r" style="left:1359px;top:839.44px;" width="16" height="21" viewBox="0 0 16 21" fill="none"><path d="M8 0 V18 M1.8 11.8 L8 18 L14.2 11.8" stroke="#f00000" stroke-width="3.5" stroke-linecap="butt" stroke-linejoin="miter"/></svg>
<div class="t" style="left:1476.61px;top:842.79px;font-size:16.5px;line-height:16.5px;font-weight:400;color:#262626;font-family:'Liberation Mono', monospace;transform:scaleX(0.7777);">-36.24</div>
<div class="t" style="left:36.00px;top:895.74px;font-size:22px;line-height:22px;font-weight:400;color:#262626;font-family:'Liberation Sans', sans-serif;transform:scaleX(0.9500);">Desktops</div>
<div class="t" style="left:400.51px;top:896.73px;font-size:23px;line-height:23px;font-weight:700;color:#1a1a1a;font-family:'Liberation Mono', monospace;transform:scaleX(0.8513);">1,693.11</div>
<svg class="r" style="left:501.5px;top:893.36px;" width="16" height="21" viewBox="0 0 16 21" fill="none"><path d="M8 21 V3 M1.8 9.2 L8 3 L14.2 9.2" stroke="#8cb800" stroke-width="3.5" stroke-linecap="butt" stroke-linejoin="miter"/></svg>
<div class="t" style="left:629.01px;top:896.73px;font-size:23px;line-height:23px;font-weight:400;color:#262626;font-family:'Liberation Mono', monospace;transform:scaleX(0.8513);">267.44</div>
<div class="t" style="left:775.51px;top:882.26px;font-size:21px;line-height:21px;font-weight:400;color:#262626;font-family:'Liberation Mono', monospace;transform:scaleX(0.9324);">267.44</div>
<div class="t" style="left:807.51px;top:911.01px;font-size:16.5px;line-height:16.5px;font-weight:400;color:#262626;font-family:'Liberation Mono', monospace;transform:scaleX(0.7777);">15.80</div>
<div class="t" style="left:945.01px;top:897.71px;font-size:16.5px;line-height:16.5px;font-weight:400;color:#262626;font-family:'Liberation Mono', monospace;transform:scaleX(0.7777);">15.80</div>
<div class="t" style="left:1142.01px;top:896.73px;font-size:23px;line-height:23px;font-weight:400;color:#262626;font-family:'Liberation Mono', monospace;transform:scaleX(0.8513);">703.00</div>
<div class="t" style="left:1258.51px;top:896.73px;font-size:23px;line-height:23px;font-weight:700;color:#1a1a1a;font-family:'Liberation Mono', monospace;transform:scaleX(0.8513);">1,693.11</div>
<svg class="r" style="left:1359px;top:893.36px;" width="16" height="21" viewBox="0 0 16 21" fill="none"><path d="M8 21 V3 M1.8 9.2 L8 3 L14.2 9.2" stroke="#8cb800" stroke-width="3.5" stroke-linecap="butt" stroke-linejoin="miter"/></svg>
<div class="t" style="left:1484.31px;top:897.71px;font-size:16.5px;line-height:16.5px;font-weight:400;color:#262626;font-family:'Liberation Mono', monospace;transform:scaleX(0.7777);">15.80</div>
<div class="t" style="left:36.00px;top:950.66px;font-size:22px;line-height:22px;font-weight:400;color:#262626;font-family:'Liberation Sans', sans-serif;transform:scaleX(0.9500);">Car Video</div>
<div class="t" style="left:400.51px;top:951.65px;font-size:23px;line-height:23px;font-weight:700;color:#1a1a1a;font-family:'Liberation Mono', monospace;transform:scaleX(0.8513);">1,360.36</div>
<svg class="r" style="left:501.5px;top:948.28px;" width="16" height="21" viewBox="0 0 16 21" fill="none"><path d="M8 21 V3 M1.8 9.2 L8 3 L14.2 9.2" stroke="#8cb800" stroke-width="3.5" stroke-linecap="butt" stroke-linejoin="miter"/></svg>
<div class="t" style="left:605.51px;top:951.65px;font-size:23px;line-height:23px;font-weight:400;color:#262626;font-family:'Liberation Mono', monospace;transform:scaleX(0.8513);">1,360.36</div>
<div class="t" style="left:752.01px;top:937.18px;font-size:21px;line-height:21px;font-weight:400;color:#262626;font-family:'Liberation Mono', monospace;transform:scaleX(0.9324);">1,360.36</div>
<div class="t" style="left:799.81px;top:965.93px;font-size:16.5px;line-height:16.5px;font-weight:400;color:#262626;font-family:'Liberation Mono', monospace;transform:scaleX(0.7777);">100.00</div>
<div class="t" style="left:937.31px;top:952.63px;font-size:16.5px;line-height:16.5px;font-weight:400;color:#262626;font-family:'Liberation Mono', monospace;transform:scaleX(0.7777);">100.00</div>
<div class="t" style="left:1142.01px;top:951.65px;font-size:23px;line-height:23px;font-weight:400;color:#262626;font-family:'Liberation Mono', monospace;transform:scaleX(0.8513);">680.00</div>
<div class="t" style="left:1258.51px;top:951.65px;font-size:23px;line-height:23px;font-weight:700;color:#1a1a1a;font-family:'Liberation Mono', monospace;transform:scaleX(0.8513);">1,360.36</div>
<svg class="r" style="left:1359px;top:948.28px;" width="16" height="21" viewBox="0 0 16 21" fill="none"><path d="M8 21 V3 M1.8 9.2 L8 3 L14.2 9.2" stroke="#8cb800" stroke-width="3.5" stroke-linecap="butt" stroke-linejoin="miter"/></svg>
<div class="t" style="left:1476.61px;top:952.63px;font-size:16.5px;line-height:16.5px;font-weight:400;color:#262626;font-family:'Liberation Mono', monospace;transform:scaleX(0.7777);">100.00</div>
<div class="t" style="left:36.00px;top:1005.58px;font-size:22px;line-height:22px;font-weight:400;color:#262626;font-family:'Liberation Sans', sans-serif;transform:scaleX(0.9500);">Printers, Scanners &amp; Fax</div>
<div class="t" style="left:400.51px;top:1006.57px;font-size:23px;line-height:23px;font-weight:700;color:#1a1a1a;font-family:'Liberation Mono', monospace;transform:scaleX(0.8513);">1,219.93</div>
<svg class="r" style="left:501.5px;top:1004.2px;" width="16" height="21" viewBox="0 0 16 21" fill="none"><path d="M8 0 V18 M1.8 11.8 L8 18 L14.2 11.8" stroke="#f00000" stroke-width="3.5" stroke-linecap="butt" stroke-linejoin="miter"/></svg>
<div class="t" style="left:629.01px;top:1006.57px;font-size:23px;line-height:23px;font-weight:400;color:#262626;font-family:'Liberation Mono', monospace;transform:scaleX(0.8513);">-43.27</div>
<div class="t" style="left:775.51px;top:992.10px;font-size:21px;line-height:21px;font-weight:400;color:#262626;font-family:'Liberation Mono', monospace;transform:scaleX(0.9324);">-43.27</div>
<div class="t" style="left:807.51px;top:1020.85px;font-size:16.5px;line-height:16.5px;font-weight:400;color:#262626;font-family:'Liberation Mono', monospace;transform:scaleX(0.7777);">-3.55</div>
<div class="t" style="left:945.01px;top:1007.55px;font-size:16.5px;line-height:16.5px;font-weight:400;color:#262626;font-family:'Liberation Mono', monospace;transform:scaleX(0.7777);">-3.55</div>
<div class="t" style="left:1118.51px;top:1006.57px;font-size:23px;line-height:23px;font-weight:400;color:#262626;font-family:'Liberation Mono', monospace;transform:scaleX(0.8513);">1,228.00</div>
<div class="t" style="left:1258.51px;top:1006.57px;font-size:23px;line-height:23px;font-weight:700;color:#1a1a1a;font-family:'Liberation Mono', monospace;transform:scaleX(0.8513);">1,219.93</div>
<svg class="r" style="left:1359px;top:1004.2px;" width="16" height="21" viewBox="0 0 16 21" fill="none"><path d="M8 0 V18 M1.8 11.8 L8 18 L14.2 11.8" stroke="#f00000" stroke-width="3.5" stroke-linecap="butt" stroke-linejoin="miter"/></svg>
<div class="t" style="left:1484.31px;top:1007.55px;font-size:16.5px;line-height:16.5px;font-weight:400;color:#262626;font-family:'Liberation Mono', monospace;transform:scaleX(0.7777);">-3.55</div>
<div class="t" style="left:36.00px;top:1060.50px;font-size:22px;line-height:22px;font-weight:400;color:#262626;font-family:'Liberation Sans', sans-serif;transform:scaleX(0.9500);">Digital SLR Cameras</div>
<div class="t" style="left:400.51px;top:1061.49px;font-size:23px;line-height:23px;font-weight:700;color:#1a1a1a;font-family:'Liberation Mono', monospace;transform:scaleX(0.8513);">1,167.70</div>
<svg class="r" style="left:501.5px;top:1058.12px;" width="16" height="21" viewBox="0 0 16 21" fill="none"><path d="M8 21 V3 M1.8 9.2 L8 3 L14.2 9.2" stroke="#8cb800" stroke-width="3.5" stroke-linecap="butt" stroke-linejoin="miter"/></svg>
<div class="t" style="left:605.51px;top:1061.49px;font-size:23px;line-height:23px;font-weight:400;color:#262626;font-family:'Liberation Mono', monospace;transform:scaleX(0.8513);">1,167.70</div>
<div class="t" style="left:752.01px;top:1047.02px;font-size:21px;line-height:21px;font-weight:400;color:#262626;font-family:'Liberation Mono', monospace;transform:scaleX(0.9324);">1,167.70</div>
<div class="t" style="left:799.81px;top:1075.77px;font-size:16.5px;line-height:16.5px;font-weight:400;color:#262626;font-family:'Liberation Mono', monospace;transform:scaleX(0.7777);">100.00</div>
<div class="t" style="left:937.31px;top:1062.47px;font-size:16.5px;line-height:16.5px;font-weight:400;color:#262626;font-family:'Liberation Mono', monospace;transform:scaleX(0.7777);">100.00</div>
<div class="t" style="left:1142.01px;top:1061.49px;font-size:23px;line-height:23px;font-weight:400;color:#262626;font-family:'Liberation Mono', monospace;transform:scaleX(0.8513);">618.00</div>
<div class="t" style="left:1258.51px;top:1061.49px;font-size:23px;line-height:23px;font-weight:700;color:#1a1a1a;font-family:'Liberation Mono', monospace;transform:scaleX(0.8513);">1,167.70</div>
<svg class="r" style="left:1359px;top:1058.12px;" width="16" height="21" viewBox="0 0 16 21" fill="none"><path d="M8 21 V3 M1.8 9.2 L8 3 L14.2 9.2" stroke="#8cb800" stroke-width="3.5" stroke-linecap="butt" stroke-linejoin="miter"/></svg>
<div class="t" style="left:1476.61px;top:1062.47px;font-size:16.5px;line-height:16.5px;font-weight:400;color:#262626;font-family:'Liberation Mono', monospace;transform:scaleX(0.7777);">100.00</div>
<div class="t" style="left:36.00px;top:1115.42px;font-size:22px;line-height:22px;font-weight:400;color:#262626;font-family:'Liberation Sans', sans-serif;transform:scaleX(0.9500);">Digital Cameras</div>
<div class="t" style="left:400.51px;top:1116.41px;font-size:23px;line-height:23px;font-weight:700;color:#1a1a1a;font-family:'Liberation Mono', monospace;transform:scaleX(0.8513);">1,079.61</div>
<svg class="r" style="left:501.5px;top:1113.04px;" width="16" height="21" viewBox="0 0 16 21" fill="none"><path d="M8 21 V3 M1.8 9.2 L8 3 L14.2 9.2" stroke="#8cb800" stroke-width="3.5" stroke-linecap="butt" stroke-linejoin="miter"/></svg>
<div class="t" style="left:605.51px;top:1116.41px;font-size:23px;line-height:23px;font-weight:400;color:#262626;font-family:'Liberation Mono', monospace;transform:scaleX(0.8513);">1,079.61</div>
<div class="t" style="left:752.01px;top:1101.94px;font-size:21px;line-height:21px;font-weight:400;color:#262626;font-family:'Liberation Mono', monospace;transform:scaleX(0.9324);">1,079.61</div>
<div class="t" style="left:799.81px;top:1130.69px;font-size:16.5px;line-height:16.5px;font-weight:400;color:#262626;font-family:'Liberation Mono', monospace;transform:scaleX(0.7777);">100.00</div>
<div class="t" style="left:937.31px;top:1117.39px;font-size:16.5px;line-height:16.5px;font-weight:400;color:#262626;font-family:'Liberation Mono', monospace;transform:scaleX(0.7777);">100.00</div>
<div class="t" style="left:1142.01px;top:1116.41px;font-size:23px;line-height:23px;font-weight:400;color:#262626;font-family:'Liberation Mono', monospace;transform:scaleX(0.8513);">952.00</div>
<div class="t" style="left:1258.51px;top:1116.41px;font-size:23px;line-height:23px;font-weight:700;color:#1a1a1a;font-family:'Liberation Mono', monospace;transform:scaleX(0.8513);">1,079.61</div>
<svg class="r" style="left:1359px;top:1113.04px;" width="16" height="21" viewBox="0 0 16 21" fill="none"><path d="M8 21 V3 M1.8 9.2 L8 3 L14.2 9.2" stroke="#8cb800" stroke-width="3.5" stroke-linecap="butt" stroke-linejoin="miter"/></svg>
<div class="t" style="left:1476.61px;top:1117.39px;font-size:16.5px;line-height:16.5px;font-weight:400;color:#262626;font-family:'Liberation Mono', monospace;transform:scaleX(0.7777);">100.00</div>
<div class="t" style="left:36.00px;top:1170.34px;font-size:22px;line-height:22px;font-weight:400;color:#262626;font-family:'Liberation Sans', sans-serif;transform:scaleX(0.9500);">Coffee Machines</div>
<div class="t" style="left:400.51px;top:1171.33px;font-size:23px;line-height:23px;font-weight:700;color:#1a1a1a;font-family:'Liberation Mono', monospace;transform:scaleX(0.8513);">1,036.32</div>
<svg class="r" style="left:501.5px;top:1168.96px;" width="16" height="21" viewBox="0 0 16 21" fill="none"><path d="M8 0 V18 M1.8 11.8 L8 18 L14.2 11.8" stroke="#f00000" stroke-width="3.5" stroke-linecap="butt" stroke-linejoin="miter"/></svg>
<div class="t" style="left:629.01px;top:1171.33px;font-size:23px;line-height:23px;font-weight:400;color:#262626;font-family:'Liberation Mono', monospace;transform:scaleX(0.8513);">-29.41</div>
<div class="t" style="left:775.51px;top:1156.86px;font-size:21px;line-height:21px;font-weight:400;color:#262626;font-family:'Liberation Mono', monospace;transform:scaleX(0.9324);">-29.41</div>
<div class="t" style="left:807.51px;top:1185.61px;font-size:16.5px;line-height:16.5px;font-weight:400;color:#262626;font-family:'Liberation Mono', monospace;transform:scaleX(0.7777);">-2.84</div>
<div class="t" style="left:945.01px;top:1172.31px;font-size:16.5px;line-height:16.5px;font-weight:400;color:#262626;font-family:'Liberation Mono', monospace;transform:scaleX(0.7777);">-2.84</div>
<div class="t" style="left:1142.01px;top:1171.33px;font-size:23px;line-height:23px;font-weight:400;color:#262626;font-family:'Liberation Mono', monospace;transform:scaleX(0.8513);">457.00</div>
<div class="t" style="left:1258.51px;top:1171.33px;font-size:23px;line-height:23px;font-weight:700;color:#1a1a1a;font-family:'Liberation Mono', monospace;transform:scaleX(0.8513);">1,036.32</div>
<svg class="r" style="left:1359px;top:1168.96px;" width="16" height="21" viewBox="0 0 16 21" fill="none"><path d="M8 0 V18 M1.8 11.8 L8 18 L14.2 11.8" stroke="#f00000" stroke-width="3.5" stroke-linecap="butt" stroke-linejoin="miter"/></svg>
<div class="t" style="left:1484.31px;top:1172.31px;font-size:16.5px;line-height:16.5px;font-weight:400;color:#262626;font-family:'Liberation Mono', monospace;transform:scaleX(0.7777);">-2.84</div>
<div class="r" style="left:0px;top:1244px;width:1732px;height:44px;background:#f3f3f3"></div>
<div class="r" style="left:0px;top:1243.5px;width:1732px;height:1.2px;background:#e0e0e0"></div>
<div class="t" style="left:15.70px;top:1258.68px;font-size:22px;line-height:22px;font-weight:400;color:#333333;font-family:'Liberation Sans', sans-serif;transform:scaleX(0.8935);">Sum:</div>
<div class="t" style="left:69.00px;top:1258.68px;font-size:22px;line-height:22px;font-weight:700;color:#333333;font-family:'Liberation Sans', sans-serif;transform:scaleX(0.9654);">40.64m</div>
<div class="t" style="left:164.00px;top:1258.68px;font-size:22px;line-height:22px;font-weight:400;color:#333333;font-family:'Liberation Sans', sans-serif;transform:scaleX(0.9618);">Avg:</div>
<div class="t" style="left:212.80px;top:1258.68px;font-size:22px;line-height:22px;font-weight:700;color:#333333;font-family:'Liberation Sans', sans-serif;transform:scaleX(0.9396);">1.27m</div>
<div class="t" style="left:295.00px;top:1258.68px;font-size:22px;line-height:22px;font-weight:400;color:#333333;font-family:'Liberation Sans', sans-serif;transform:scaleX(0.9492);">Count:</div>
<div class="t" style="left:364.00px;top:1258.68px;font-size:22px;line-height:22px;font-weight:700;color:#333333;font-family:'Liberation Sans', sans-serif;transform:scaleX(0.9419);">32</div>
<svg class="r" style="left:408px;top:1257px;" width="26" height="22" viewBox="0 0 26 22" fill="none"><path d="M2 11 Q13 1 24 11 Q13 21 2 11 Z" stroke="#444" stroke-width="1.5" fill="none"/><circle cx="13" cy="11" r="3.6" stroke="#444" stroke-width="1.5" fill="none"/><path d="M4 2 L22 20" stroke="#444" stroke-width="1.6"/></svg>
<div class="t" style="left:569.00px;top:1256.78px;font-size:22px;line-height:22px;font-weight:400;color:#333333;font-family:'Liberation Sans', sans-serif;transform:scaleX(0.9513);">Rows per page:</div>
<div class="r" style="left:724.8px;top:1253px;width:118px;height:40px;background:#fff;border:1px solid #e2e2e2"></div>
<div class="t" style="left:746.50px;top:1260.38px;font-size:22px;line-height:22px;font-weight:400;color:#333333;font-family:'Liberation Sans', sans-serif;transform:scaleX(0.9931);">Auto</div>
<svg class="r" style="left:797px;top:1262px;" width="28" height="15" viewBox="0 0 28 15" fill="none"><path d="M2 2 L13.5 12.5 L25 2" stroke="#333" stroke-width="1.6" fill="none"/></svg>
<svg class="r" style="left:956px;top:1254px;" width="30" height="30" viewBox="0 0 30 30" fill="none"><path d="M28.27 17.55 L26.04 22.93 L22.24 22.09 L21.59 22.74 L22.43 26.54 L17.05 28.77 L14.96 25.49 L14.04 25.49 L11.95 28.77 L6.57 26.54 L7.41 22.74 L6.76 22.09 L2.96 22.93 L0.73 17.55 L4.01 15.46 L4.01 14.54 L0.73 12.45 L2.96 7.07 L6.76 7.91 L7.41 7.26 L6.57 3.46 L11.95 1.23 L14.04 4.51 L14.96 4.51 L17.05 1.23 L22.43 3.46 L21.59 7.26 L22.24 7.91 L26.04 7.07 L28.27 12.45 L24.99 14.54 L24.99 15.46 Z" stroke="#444" stroke-width="1.5" stroke-linejoin="round" fill="none"/><circle cx="14.5" cy="15" r="6" stroke="#1c4f96" stroke-width="2" fill="none"/></svg>
<div class="r" style="left:1006px;top:1269.5px;width:18px;height:2px;background:#444"></div>
<div class="r" style="left:1040px;top:1254.7px;width:100px;height:40px;background:#fff;border:1px solid #e2e2e2"></div>
<div class="t" style="left:1063.00px;top:1260.88px;font-size:22px;line-height:22px;font-weight:400;color:#333333;font-family:'Liberation Sans', sans-serif;transform:scaleX(0.9535);">100%</div>
<svg class="r" style="left:1148px;top:1258px;" width="24" height="24" viewBox="0 0 24 24" fill="none"><path d="M12 2 V22 M2 12 H22" stroke="#444" stroke-width="2" fill="none"/></svg>
<svg class="r" style="left:1221px;top:1257px;" width="60" height="24" viewBox="0 0 60 24" fill="none"><path d="M3 3 V21 M19 3.5 L10.5 12 L19 20.5 M40.5 3.5 L32.5 12 L40.5 20.5" stroke="#333" stroke-width="2.6" fill="none"/></svg>
<div class="t" style="left:1276.30px;top:1257.08px;font-size:22px;line-height:22px;font-weight:400;color:#333333;font-family:'Liberation Sans', sans-serif;transform:scaleX(0.8935);">Page</div>
<div class="r" style="left:1331px;top:1250px;width:44.6px;height:35px;background:#f3f3f3;border:1px solid #dedede"></div>
<div class="t" style="left:1349.00px;top:1257.08px;font-size:22px;line-height:22px;font-weight:400;color:#333333;font-family:'Liberation Sans', sans-serif;transform:scaleX(0.6552);">1</div>
<div class="t" style="left:1384.00px;top:1257.08px;font-size:22px;line-height:22px;font-weight:400;color:#333333;font-family:'Liberation Sans', sans-serif;transform:scaleX(0.9690);">of 3</div>
<svg class="r" style="left:1428px;top:1257px;" width="50" height="24" viewBox="0 0 50 24" fill="none"><path d="M4 3.5 L12 12 L4 20.5 M27 3.5 L35.5 12 L27 20.5 M44 3 V21" stroke="#333" stroke-width="2.6" fill="none"/></svg>
<div class="t" style="left:1561.00px;top:1257.08px;font-size:22px;line-height:22px;font-weight:400;color:#333333;font-family:'Liberation Sans', sans-serif;transform:scaleX(0.9105);">1  to  14  of  32</div>
<div class="r" style="left:1732px;top:0px;width:572px;height:1288px;background:#f4f4f4"></div>
<div class="r" style="left:1726px;top:0px;width:6px;height:1288px;background:linear-gradient(90deg,rgba(0,0,0,0),rgba(0,0,0,0.07))"></div>
<div class="r" style="left:1731px;top:0px;width:1px;height:1288px;background:#e2e2e2"></div>
<div class="r" style="left:1732px;top:0px;width:572px;height:96px;background:#ffffff"></div>
<div class="r" style="left:1732px;top:1174px;width:572px;height:114px;background:#ffffff"></div>
<svg class="r" style="left:2208px;top:0px;" width="16" height="8" viewBox="0 0 16 8" fill="none"><path d="M3 6.5 L8 2 M6 0 L10 4.5" stroke="#888" stroke-width="1.1"/></svg>
<div class="r" style="left:2247px;top:2px;width:5px;height:1px;background:#888"></div>
<div class="r" style="left:2274.7px;top:-6px;width:13px;height:11.5px;border:1.2px solid #888;border-radius:2px"></div>
<div class="r" style="left:2280.6px;top:0px;width:1.1px;height:5px;background:#888"></div>
<svg class="r" style="left:1764px;top:46px;" width="17" height="27" viewBox="0 0 17 27" fill="none"><path d="M14.5 2.5 L3 13.5 L14.5 24.5" stroke="#333" stroke-width="1.6"/></svg>
<div class="t" style="left:1825.00px;top:33.99px;font-size:39px;line-height:39px;font-weight:400;color:#2b2b2b;font-family:'Liberation Sans', sans-serif;transform:scaleX(0.9201);-webkit-text-stroke:0.6px #fff;">Conditional Formatting</div>
<svg class="r" style="left:2277px;top:53px;" width="25" height="25" viewBox="0 0 25 25" fill="none"><path d="M2.6 2.2 L22.8 22.1 M22.8 2.2 L2.6 22.1" stroke="#222" stroke-width="2.1"/></svg>
<div class="t" style="left:1762.70px;top:130.28px;font-size:24px;line-height:24px;font-weight:700;color:#2b2b2b;font-family:'Liberation Sans', sans-serif;transform:scaleX(0.9395);-webkit-text-stroke:0.2px #f4f4f4;">Title</div>
<div class="t" style="left:1762.70px;top:211.18px;font-size:24px;line-height:24px;font-weight:700;color:#2b2b2b;font-family:'Liberation Sans', sans-serif;transform:scaleX(0.9448);-webkit-text-stroke:0.2px #f4f4f4;">Apply to</div>
<div class="t" style="left:1762.70px;top:278.18px;font-size:24px;line-height:24px;font-weight:700;color:#2b2b2b;font-family:'Liberation Sans', sans-serif;transform:scaleX(0.9204);-webkit-text-stroke:0.2px #f4f4f4;">Row hierarchy</div>
<div class="t" style="left:1762.70px;top:312.88px;font-size:24px;line-height:24px;font-weight:700;color:#2b2b2b;font-family:'Liberation Sans', sans-serif;transform:scaleX(0.8843);-webkit-text-stroke:0.2px #f4f4f4;">levels</div>
<div class="t" style="left:1762.70px;top:380.38px;font-size:24px;line-height:24px;font-weight:700;color:#2b2b2b;font-family:'Liberation Sans', sans-serif;transform:scaleX(0.9367);-webkit-text-stroke:0.2px #f4f4f4;">Format by</div>
<div class="t" style="left:1762.70px;top:464.28px;font-size:24px;line-height:24px;font-weight:700;color:#2b2b2b;font-family:'Liberation Sans', sans-serif;transform:scaleX(0.9009);-webkit-text-stroke:0.2px #f4f4f4;">Based on</div>
<div class="t" style="left:1762.70px;top:551.08px;font-size:24px;line-height:24px;font-weight:700;color:#2b2b2b;font-family:'Liberation Sans', sans-serif;transform:scaleX(0.9060);-webkit-text-stroke:0.2px #f4f4f4;">Display</div>
<div class="t" style="left:1762.70px;top:764.28px;font-size:24px;line-height:24px;font-weight:700;color:#2b2b2b;font-family:'Liberation Sans', sans-serif;transform:scaleX(0.9176);-webkit-text-stroke:0.2px #f4f4f4;">Icon Position</div>
<div class="t" style="left:1762.70px;top:847.18px;font-size:24px;line-height:24px;font-weight:700;color:#2b2b2b;font-family:'Liberation Sans', sans-serif;transform:scaleX(0.9206);-webkit-text-stroke:0.2px #f4f4f4;">Classification range</div>
<div class="r" style="left:1965px;top:114.5px;width:310.5px;height:58.0px;background:#fff;border:1.3px solid #dedede;border-radius:2px"></div>
<div class="t" style="left:1989.00px;top:133.18px;font-size:22px;line-height:22px;font-weight:400;color:#2b2b2b;font-family:'Liberation Sans', sans-serif;transform:scaleX(0.9969);">Icons - Margin %</div>
<div class="r" style="left:1966px;top:199px;width:309.5px;height:57.5px;background:#fff;border:1.3px solid #dedede;border-radius:3px"></div>
<div class="t" style="left:1984.00px;top:217.78px;font-size:22px;line-height:22px;font-weight:400;color:#2b2b2b;font-family:'Liberation Sans', sans-serif;transform:scaleX(0.8545);">Sales</div>
<svg class="r" style="left:2245.7px;top:222.5px;" width="17.3" height="10.5" viewBox="0 0 17.3 10.5" fill="none"><path d="M2 2 L8.65 8.50 L15.30 2" stroke="#333" stroke-width="1.3" fill="none"/></svg>
<div class="r" style="left:1966px;top:284.2px;width:309.5px;height:57.80000000000001px;background:#fff;border:1.3px solid #dedede;border-radius:3px"></div>
<div class="t" style="left:1984.00px;top:302.78px;font-size:22px;line-height:22px;font-weight:400;color:#2b2b2b;font-family:'Liberation Sans', sans-serif;transform:scaleX(0.9617);">Values only</div>
<svg class="r" style="left:2245.7px;top:307.85px;" width="17.3" height="10.5" viewBox="0 0 17.3 10.5" fill="none"><path d="M2 2 L8.65 8.50 L15.30 2" stroke="#333" stroke-width="1.3" fill="none"/></svg>
<div class="r" style="left:1966px;top:370px;width:309.5px;height:57.5px;background:#fff;border:1.3px solid #dedede;border-radius:3px"></div>
<div class="t" style="left:1984.00px;top:388.38px;font-size:22px;line-height:22px;font-weight:400;color:#2b2b2b;font-family:'Liberation Sans', sans-serif;transform:scaleX(0.9569);">Classification</div>
<svg class="r" style="left:2245.7px;top:393.5px;" width="17.3" height="10.5" viewBox="0 0 17.3 10.5" fill="none"><path d="M2 2 L8.65 8.50 L15.30 2" stroke="#333" stroke-width="1.3" fill="none"/></svg>
<div class="r" style="left:1966px;top:454px;width:309.5px;height:57.5px;background:#fff;border:1.3px solid #dedede;border-radius:3px"></div>
<div class="t" style="left:1984.00px;top:473.18px;font-size:22px;line-height:22px;font-weight:400;color:#2b2b2b;font-family:'Liberation Sans', sans-serif;transform:scaleX(0.9866);">Margin %</div>
<svg class="r" style="left:2245.7px;top:477.5px;" width="17.3" height="10.5" viewBox="0 0 17.3 10.5" fill="none"><path d="M2 2 L8.65 8.50 L15.30 2" stroke="#333" stroke-width="1.3" fill="none"/></svg>
<div class="r" style="left:1966px;top:535px;width:309.5px;height:57.5px;background:#fff;border:1.3px solid #dedede;border-radius:3px"></div>
<div class="t" style="left:1980.00px;top:550.53px;font-size:23px;line-height:23px;font-weight:700;color:#262626;font-family:'Liberation Sans', sans-serif;transform:scaleX(0.8883);font-weight:600;">Custom</div>
<svg class="r" style="left:2245.7px;top:558.5px;" width="17.3" height="10.5" viewBox="0 0 17.3 10.5" fill="none"><path d="M2 2 L8.65 8.50 L15.30 2" stroke="#333" stroke-width="1.3" fill="none"/></svg>
<div class="r" style="left:1966px;top:753.6px;width:309.5px;height:56.89999999999998px;background:#fff;border:1.3px solid #dedede;border-radius:3px"></div>
<div class="t" style="left:1984.00px;top:772.08px;font-size:22px;line-height:22px;font-weight:400;color:#2b2b2b;font-family:'Liberation Sans', sans-serif;transform:scaleX(0.9932);">Right of data</div>
<svg class="r" style="left:2245.7px;top:776.8px;" width="17.3" height="10.5" viewBox="0 0 17.3 10.5" fill="none"><path d="M2 2 L8.65 8.50 L15.30 2" stroke="#333" stroke-width="1.3" fill="none"/></svg>
<div class="r" style="left:1978px;top:618.5px;width:29px;height:29px;background:#0078d4;border-radius:2px"></div>
<svg class="r" style="left:1978px;top:618.5px;" width="29" height="29" viewBox="0 0 29 29" fill="none"><path d="M7 15 L12 20 L22.5 9" stroke="#fff" stroke-width="3" fill="none"/></svg>
<div class="t" style="left:2023.00px;top:624.28px;font-size:22px;line-height:22px;font-weight:400;color:#2b2b2b;font-family:'Liberation Sans', sans-serif;transform:scaleX(0.9964);">Apply to charts</div>
<div class="r" style="left:1978px;top:685.7px;width:29px;height:29px;background:#fff;border:1.4px solid #444;border-radius:2px"></div>
<div class="t" style="left:2023.00px;top:690.98px;font-size:22px;line-height:22px;font-weight:400;color:#2b2b2b;font-family:'Liberation Sans', sans-serif;transform:scaleX(0.9716);">Show as new column</div>
<svg class="r" style="left:1760px;top:894px;" width="33" height="33" viewBox="0 0 33 33" fill="none"><circle cx="16.5" cy="16.5" r="13.8" fill="#fff" stroke="#0078d4" stroke-width="1.6"/><circle cx="16.5" cy="16.5" r="7.3" fill="#0078d4"/></svg>
<div class="t" style="left:1806.00px;top:900.38px;font-size:22px;line-height:22px;font-weight:700;color:#2b2b2b;font-family:'Liberation Sans', sans-serif;transform:scaleX(0.9299);">Value</div>
<svg class="r" style="left:1872px;top:894px;" width="33" height="33" viewBox="0 0 33 33" fill="none"><circle cx="16.5" cy="16.5" r="13.8" fill="#fff" stroke="#666" stroke-width="1.2"/></svg>
<div class="t" style="left:1919.00px;top:900.38px;font-size:22px;line-height:22px;font-weight:700;color:#2b2b2b;font-family:'Liberation Sans', sans-serif;transform:scaleX(0.9276);">Percentage</div>
<div class="t" style="left:1762.00px;top:959.38px;font-size:22px;line-height:22px;font-weight:400;color:#2b2b2b;font-family:'Liberation Sans', sans-serif;transform:scaleX(1.1001);">From(&gt;=)</div>
<div class="t" style="left:1901.70px;top:959.38px;font-size:22px;line-height:22px;font-weight:400;color:#2b2b2b;font-family:'Liberation Sans', sans-serif;transform:scaleX(1.1025);">To(&lt;=)</div>
<svg class="r" style="left:2040px;top:945px;" width="32" height="40" viewBox="0 0 32 40" fill="none"><path d="M13.3 32.8 V7 M9.9 10.7 L13.3 6.9 L16.8 10.7" stroke="#333" stroke-width="2" fill="none"/><path d="M24.1 7.3 V33 M20.7 30 L24.1 33.5 L27.6 30" stroke="#1c4f96" stroke-width="2" fill="none"/></svg>
<svg class="r" style="left:2151px;top:945px;" width="32" height="40" viewBox="0 0 32 40" fill="none"><path d="M13.3 32.8 V7 M9.9 10.7 L13.3 6.9 L16.8 10.7" stroke="#333" stroke-width="2" fill="none"/><path d="M24.1 7.3 V33 M20.7 30 L24.1 33.5 L27.6 30" stroke="#1c4f96" stroke-width="2" fill="none"/></svg>
<div class="r" style="left:1762px;top:1000px;width:124px;height:58px;background:#fff;border:1.3px solid #dcdcdc;border-radius:0px"></div>
<div class="r" style="left:1901.7px;top:1000px;width:123.89999999999986px;height:58px;background:#fff;border:1.3px solid #dcdcdc;border-radius:0px"></div>
<div class="t" style="left:1787.00px;top:1019.08px;font-size:22px;line-height:22px;font-weight:400;color:#2b2b2b;font-family:'Liberation Sans', sans-serif;transform:scaleX(1.0164);">Min</div>
<div class="t" style="left:1926.00px;top:1019.08px;font-size:22px;line-height:22px;font-weight:400;color:#2b2b2b;font-family:'Liberation Sans', sans-serif;transform:scaleX(0.8600);">0</div>
<div class="r" style="left:2040.5px;top:1002px;width:95.5px;height:58px;background:#f4f4f4;border:1.3px solid #dedede;border-radius:0px"></div>
<svg class="r" style="left:2067px;top:1019px;" width="20" height="23" viewBox="0 0 20 23" fill="none"><path d="M10 0 V19 M2.5 11.5 L10 19 L17.5 11.5" stroke="#222" stroke-width="3.2" fill="none"/></svg>
<svg class="r" style="left:2108.5px;top:1023.5px;" width="21" height="13" viewBox="0 0 21 13" fill="none"><path d="M2 2 L10.50 11.00 L19.00 2" stroke="#333" stroke-width="1.3" fill="none"/></svg>
<div class="r" style="left:2151.8px;top:1002px;width:83.69999999999982px;height:58px;background:#f4f4f4;border:1.3px solid #dedede;border-radius:0px"></div>
<div class="r" style="left:2160px;top:1011px;width:38px;height:38px;background:#ffe8e8"></div>
<div class="r" style="left:2162.5px;top:1013.5px;width:33px;height:33px;background:#ff0000"></div>
<svg class="r" style="left:2209.0px;top:1022.5px;" width="21" height="13" viewBox="0 0 21 13" fill="none"><path d="M2 2 L10.50 11.00 L19.00 2" stroke="#333" stroke-width="1.3" fill="none"/></svg>
<svg class="r" style="left:2250px;top:1016px;" width="26" height="30" viewBox="0 0 26 30" fill="none"><path d="M3.5 5.8 H22.5 M9 5.5 V2.3 H17 V5.5" stroke="#333" stroke-width="1.6" fill="none"/><path d="M5.5 6 V25.6 Q5.5 27.4 7.3 27.4 H18.7 Q20.5 27.4 20.5 25.6 V6" stroke="#333" stroke-width="1.7" fill="none"/><path d="M10 9.5 V23.5 M13 9.5 V23.5 M16 9.5 V23.5" stroke="#333" stroke-width="1.3"/></svg>
<div class="r" style="left:1762px;top:1073px;width:124px;height:58px;background:#fff;border:1.3px solid #dcdcdc;border-radius:0px"></div>
<div class="r" style="left:1901.7px;top:1073px;width:123.89999999999986px;height:58px;background:#fff;border:1.3px solid #dcdcdc;border-radius:0px"></div>
<div class="t" style="left:1787.00px;top:1092.08px;font-size:22px;line-height:22px;font-weight:400;color:#2b2b2b;font-family:'Liberation Sans', sans-serif;transform:scaleX(0.8600);">0</div>
<div class="t" style="left:1926.00px;top:1092.08px;font-size:22px;line-height:22px;font-weight:400;color:#2b2b2b;font-family:'Liberation Sans', sans-serif;transform:scaleX(0.9572);">Max</div>
<div class="r" style="left:2040.5px;top:1075px;width:95.5px;height:58px;background:#f4f4f4;border:1.3px solid #dedede;border-radius:0px"></div>
<svg class="r" style="left:2067px;top:1092px;" width="20" height="23" viewBox="0 0 20 23" fill="none"><path d="M10 23 V4 M2.5 11.5 L10 4 L17.5 11.5" stroke="#222" stroke-width="3.2" fill="none"/></svg>
<svg class="r" style="left:2108.5px;top:1096.5px;" width="21" height="13" viewBox="0 0 21 13" fill="none"><path d="M2 2 L10.50 11.00 L19.00 2" stroke="#333" stroke-width="1.3" fill="none"/></svg>
<div class="r" style="left:2151.8px;top:1075px;width:83.69999999999982px;height:58px;background:#f4f4f4;border:1.3px solid #dedede;border-radius:0px"></div>
<div class="r" style="left:2160px;top:1084px;width:38px;height:38px;background:#eef3df"></div>
<div class="r" style="left:2162.5px;top:1086.5px;width:33px;height:33px;background:#8cb800"></div>
<svg class="r" style="left:2209.0px;top:1095.5px;" width="21" height="13" viewBox="0 0 21 13" fill="none"><path d="M2 2 L10.50 11.00 L19.00 2" stroke="#333" stroke-width="1.3" fill="none"/></svg>
<svg class="r" style="left:2250px;top:1089px;" width="26" height="30" viewBox="0 0 26 30" fill="none"><path d="M3.5 5.8 H22.5 M9 5.5 V2.3 H17 V5.5" stroke="#333" stroke-width="1.6" fill="none"/><path d="M5.5 6 V25.6 Q5.5 27.4 7.3 27.4 H18.7 Q20.5 27.4 20.5 25.6 V6" stroke="#333" stroke-width="1.7" fill="none"/><path d="M10 9.5 V23.5 M13 9.5 V23.5 M16 9.5 V23.5" stroke="#333" stroke-width="1.3"/></svg>
<div class="r" style="left:1740px;top:1140px;width:400px;height:34px;overflow:hidden"><div class="t" style="left:24.80px;top:15.88px;font-size:22px;line-height:22px;font-weight:400;color:#0078d4;font-family:'Liberation Sans', sans-serif;transform:scaleX(0.9479);">+</div><div class="t" style="left:48.00px;top:13.84px;font-size:25px;line-height:25px;font-weight:400;color:#2b2b2b;font-family:'Liberation Sans', sans-serif;transform:scaleX(1.0080);">Add range</div></div>
<div class="r" style="left:1960.5px;top:744px;width:322px;height:131px;border:2px solid #e0474c"></div>
<div class="r" style="left:1966px;top:817px;width:308px;height:56px;background:#fff;border:1px solid #c8c8c8;border-radius:6px;box-shadow:0 10px 22px rgba(0,0,0,0.22)"></div>
<div class="r" style="left:1967px;top:837px;width:306px;height:18px;background:#6f6f6f"></div>
<div class="t" style="left:1975.00px;top:819.95px;font-size:14px;line-height:14px;font-weight:400;color:#444;font-family:'Liberation Sans', sans-serif;transform:scaleX(0.9666);">Left of data</div>
<div class="t" style="left:1975.00px;top:838.85px;font-size:14px;line-height:14px;font-weight:400;color:#fff;font-family:'Liberation Sans', sans-serif;transform:scaleX(0.9817);">Right of data</div>
<div class="t" style="left:1975.00px;top:857.15px;font-size:14px;line-height:14px;font-weight:400;color:#444;font-family:'Liberation Sans', sans-serif;transform:scaleX(0.9764);">Only icon</div>
<div class="r" style="left:1981.7px;top:1200.5px;width:146.3px;height:65.5px;background:#f3f3f3"></div>
<div class="t" style="left:2030.60px;top:1223.38px;font-size:24px;line-height:24px;font-weight:700;color:#262626;font-family:'Liberation Sans', sans-serif;transform:scaleX(0.8542);">Back</div>
<div class="r" style="left:2146px;top:1200.5px;width:147px;height:65.5px;background:#0078d4"></div>
<div class="t" style="left:2188.00px;top:1223.38px;font-size:24px;line-height:24px;font-weight:700;color:#ffffff;font-family:'Liberation Sans', sans-serif;transform:scaleX(0.9517);">Apply</div></body></html>
